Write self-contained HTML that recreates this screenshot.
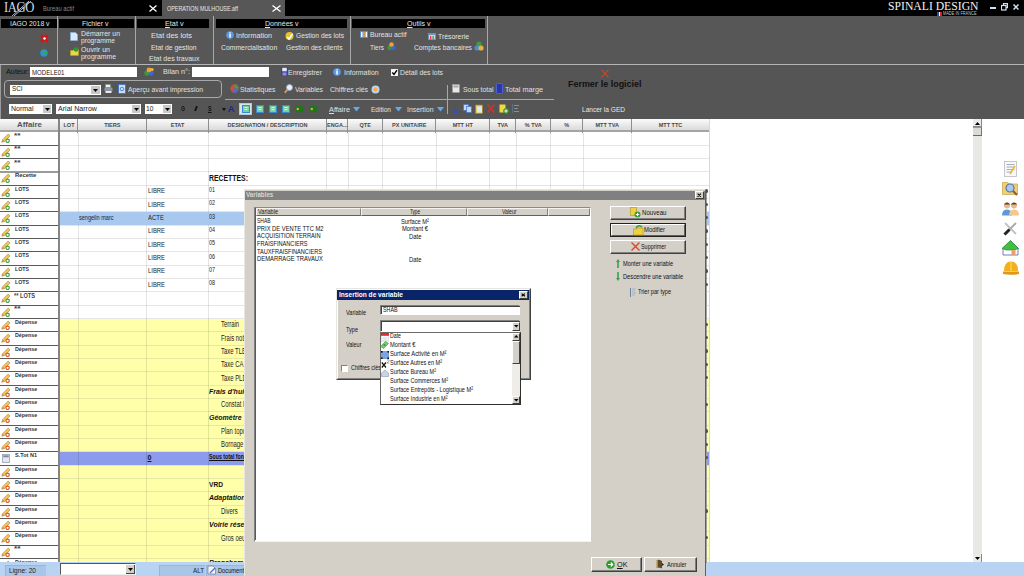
<!DOCTYPE html><html><head><meta charset="utf-8"><style>

*{margin:0;padding:0;box-sizing:border-box}
html,body{width:1024px;height:576px;overflow:hidden;background:#fff;position:relative}
body>div,body>svg{position:absolute}
.t{position:absolute;transform-origin:0 50%;-webkit-font-smoothing:antialiased}

</style></head><body>
<div style="left:0px;top:0px;width:1024px;height:16px;background:#000"></div>
<div style="left:162px;top:0px;width:123px;height:16px;background:#575757"></div>
<div class="t" style="transform:scaleX(0.8451);left:4px;top:-2.00px;font-size:15px;line-height:18px;color:#c9d9ef;font-weight:normal;font-family:'Liberation Serif',sans-serif;white-space:nowrap;letter-spacing:-0.5px;">IAGO</div>
<svg style="left:0;top:0" width="40" height="18"><line x1="12" y1="16" x2="29" y2="1" stroke="#bcd0ea" stroke-width="0.9"/><line x1="14" y1="16" x2="31" y2="1" stroke="#bcd0ea" stroke-width="0.9"/></svg>
<div class="t" style="transform:scaleX(0.8298);left:43px;top:4.80px;font-size:7px;line-height:8px;color:#8a8a8a;font-weight:normal;font-family:'Liberation Sans',sans-serif;white-space:nowrap;">Bureau actif</div>
<svg style="left:149px;top:5px" width="8" height="7"><path d="M0.5 0.5L7.5 6.5M7.5 0.5L0.5 6.5" stroke="#fff" stroke-width="1.3"/></svg>
<div class="t" style="transform:scaleX(0.7723);left:166.5px;top:4.80px;font-size:7px;line-height:8px;color:#e8e8e8;font-weight:normal;font-family:'Liberation Sans',sans-serif;white-space:nowrap;">OPERATION MULHOUSE.aff</div>
<svg style="left:272px;top:5px" width="9" height="7"><path d="M0.5 0.5L8.5 6.5M8.5 0.5L0.5 6.5" stroke="#fff" stroke-width="1.3"/></svg>
<div class="t" style="transform:scaleX(0.9731);left:888px;top:-0.70px;font-size:12px;line-height:14px;color:#f2f2f2;font-weight:normal;font-family:'Liberation Serif',sans-serif;white-space:nowrap;">SPINALI DESIGN</div>
<div style="left:937px;top:12px;width:5px;height:4px;background:linear-gradient(90deg,#2a4fa8 0 33%,#fff 33% 66%,#d22 66%)"></div>
<div class="t" style="transform:scaleX(0.8698);left:943px;top:11.30px;font-size:4.5px;line-height:5px;color:#c8c8c8;font-weight:normal;font-family:'Liberation Sans',sans-serif;white-space:nowrap;">MADE IN FRANCE</div>
<div style="left:990px;top:7px;width:6px;height:2px;background:#d0e0f4"></div>
<svg style="left:1001px;top:3px" width="7" height="8"><rect x="0.5" y="2.5" width="4.5" height="4.5" fill="none" stroke="#d0e0f4" stroke-width="1.2"/><path d="M2.5 2V0.6H6.4V4.6H5" fill="none" stroke="#d0e0f4" stroke-width="1.2"/></svg>
<svg style="left:1013px;top:4px" width="6" height="6"><path d="M0.5 0.5L5.5 5.5M5.5 0.5L0.5 5.5" stroke="#d0e0f4" stroke-width="1.5"/></svg>
<div style="left:0px;top:16px;width:1024px;height:48px;background:#575757"></div>
<div style="left:1px;top:19px;width:55.5px;height:9px;background:#000"></div>
<div style="left:59px;top:19px;width:74.5px;height:9px;background:#000"></div>
<div style="left:137px;top:19px;width:72px;height:9px;background:#000"></div>
<div style="left:216px;top:19px;width:131px;height:9px;background:#000"></div>
<div style="left:352px;top:19px;width:133px;height:9px;background:#000"></div>
<div style="left:57px;top:16px;width:1px;height:48px;background:#a8a8a8"></div>
<div style="left:135px;top:16px;width:1px;height:48px;background:#a8a8a8"></div>
<div style="left:213px;top:16px;width:1px;height:48px;background:#a8a8a8"></div>
<div style="left:350px;top:16px;width:1px;height:48px;background:#a8a8a8"></div>
<div style="left:487px;top:16px;width:1px;height:48px;background:#a8a8a8"></div>
<div style="left:0px;top:64px;width:1024px;height:1px;background:#b4b4b4"></div>
<div class="t" style="transform:scaleX(0.9504);left:9.5px;top:19.10px;font-size:7.2px;line-height:9px;color:#e4e4e4;font-weight:normal;font-family:'Liberation Sans',sans-serif;white-space:nowrap;">IAGO 2018 v</div>
<div class="t" style="transform:scaleX(0.9753);left:81.7px;top:19.10px;font-size:7.2px;line-height:9px;color:#e4e4e4;font-weight:normal;font-family:'Liberation Sans',sans-serif;white-space:nowrap;">Fichier v</div>
<div class="t" style="transform:scaleX(1.0114);left:165.4px;top:19.10px;font-size:7.2px;line-height:9px;color:#e4e4e4;font-weight:normal;font-family:'Liberation Sans',sans-serif;white-space:nowrap;"><span style="text-decoration:underline;text-decoration-thickness:1px;text-underline-offset:1px">E</span>tat v</div>
<div class="t" style="transform:scaleX(0.9745);left:265px;top:18.80px;font-size:7.2px;line-height:9px;color:#e4e4e4;font-weight:normal;font-family:'Liberation Sans',sans-serif;white-space:nowrap;"><span style="text-decoration:underline;text-decoration-thickness:1px;text-underline-offset:1px">D</span>onnées v</div>
<div class="t" style="transform:scaleX(0.9804);left:406.5px;top:18.50px;font-size:7.2px;line-height:9px;color:#e4e4e4;font-weight:normal;font-family:'Liberation Sans',sans-serif;white-space:nowrap;"><span style="text-decoration:underline;text-decoration-thickness:1px;text-underline-offset:1px">O</span>utils v</div>
<svg style="left:40px;top:34px" width="9" height="9"><path d="M1 1L8 8M8 1L1 8" stroke="#e01010" stroke-width="2.6"/><circle cx="4.5" cy="4.5" r="1.2" fill="#fff"/></svg>
<svg style="left:40px;top:48.5px" width="8" height="8"><circle cx="4" cy="4" r="3.8" fill="#2a8fd8"/><path d="M1.5 2.5Q3 1.5 4 3T3 6M5 1.5Q7 3 6 5" stroke="#3cae3c" stroke-width="1.3" fill="none"/></svg>
<svg style="left:70px;top:31.5px" width="8" height="9"><path d="M0.5 0.5H5.5L7.5 2.5V8.5H0.5Z" fill="#dce8f8" stroke="#8ab0e0" stroke-width="0.8"/></svg>
<div class="t" style="transform:scaleX(0.9667);left:81px;top:28.80px;font-size:7.2px;line-height:9px;color:#e4e4e4;font-weight:normal;font-family:'Liberation Sans',sans-serif;white-space:nowrap;">Démarrer un</div>
<div class="t" style="transform:scaleX(0.9252);left:81px;top:35.50px;font-size:7.2px;line-height:9px;color:#e4e4e4;font-weight:normal;font-family:'Liberation Sans',sans-serif;white-space:nowrap;">programme</div>
<svg style="left:70px;top:47px" width="9" height="9"><path d="M0.5 3.5H3L4 2.5H8.5V8.5H0.5Z" fill="#e8d848" stroke="#b8a020" stroke-width="0.6"/><circle cx="6" cy="2.5" r="2.2" fill="#2a9a2a"/></svg>
<div class="t" style="transform:scaleX(0.9810);left:81px;top:44.50px;font-size:7.2px;line-height:9px;color:#e4e4e4;font-weight:normal;font-family:'Liberation Sans',sans-serif;white-space:nowrap;">Ouvrir un</div>
<div class="t" style="transform:scaleX(0.9524);left:81px;top:52.00px;font-size:7.2px;line-height:9px;color:#e4e4e4;font-weight:normal;font-family:'Liberation Sans',sans-serif;white-space:nowrap;">programme</div>
<div class="t" style="transform:scaleX(1.0363);left:150.5px;top:30.70px;font-size:7.2px;line-height:9px;color:#e4e4e4;font-weight:normal;font-family:'Liberation Sans',sans-serif;white-space:nowrap;">Etat des lots</div>
<div class="t" style="transform:scaleX(0.9488);left:150.5px;top:42.50px;font-size:7.2px;line-height:9px;color:#e4e4e4;font-weight:normal;font-family:'Liberation Sans',sans-serif;white-space:nowrap;">Etat de gestion</div>
<div class="t" style="transform:scaleX(0.9723);left:148.5px;top:54.00px;font-size:7.2px;line-height:9px;color:#e4e4e4;font-weight:normal;font-family:'Liberation Sans',sans-serif;white-space:nowrap;">Etat des travaux</div>
<svg style="left:226px;top:31px" width="8" height="9"><circle cx="4" cy="4" r="3.8" fill="#5a9ae6"/><rect x="3.3" y="3" width="1.5" height="3.6" fill="#fff"/><rect x="3.3" y="1.3" width="1.5" height="1.2" fill="#fff"/><path d="M3 7.5L4 9L5 7.5" fill="#5a9ae6"/></svg>
<div class="t" style="transform:scaleX(1.0009);left:236px;top:30.70px;font-size:7.2px;line-height:9px;color:#e4e4e4;font-weight:normal;font-family:'Liberation Sans',sans-serif;white-space:nowrap;">Information</div>
<svg style="left:285px;top:30.5px" width="9" height="10"><circle cx="4.5" cy="5" r="4" fill="#e8c030"/><path d="M2 6L4 8L7.5 3" stroke="#fff" stroke-width="1.5" fill="none"/></svg>
<div class="t" style="transform:scaleX(0.9312);left:295.6px;top:30.70px;font-size:7.2px;line-height:9px;color:#e4e4e4;font-weight:normal;font-family:'Liberation Sans',sans-serif;white-space:nowrap;">Gestion des lots</div>
<div class="t" style="transform:scaleX(0.9505);left:221.4px;top:42.90px;font-size:7.2px;line-height:9px;color:#e4e4e4;font-weight:normal;font-family:'Liberation Sans',sans-serif;white-space:nowrap;">Commercialisation</div>
<div class="t" style="transform:scaleX(0.9303);left:286px;top:42.90px;font-size:7.2px;line-height:9px;color:#e4e4e4;font-weight:normal;font-family:'Liberation Sans',sans-serif;white-space:nowrap;">Gestion des clients</div>
<svg style="left:360px;top:31px" width="8" height="7"><rect x="0" y="0" width="8" height="7" fill="#5a8ad0"/><rect x="1" y="1" width="1.5" height="5" fill="#fff"/><rect x="3.3" y="1" width="1.5" height="5" fill="#f0a040"/><rect x="5.6" y="1" width="1.5" height="5" fill="#fff"/></svg>
<div class="t" style="transform:scaleX(0.9541);left:369.6px;top:30.00px;font-size:7.2px;line-height:9px;color:#e4e4e4;font-weight:normal;font-family:'Liberation Sans',sans-serif;white-space:nowrap;">Bureau actif</div>
<svg style="left:428px;top:33px" width="8" height="7"><rect x="0" y="0" width="8" height="7" fill="#6a90c8"/><rect x="1" y="2" width="6" height="4" fill="#d0d8e8"/><rect x="2" y="3" width="1.3" height="3" fill="#e04040"/><rect x="4.5" y="3" width="1.3" height="3" fill="#40a040"/></svg>
<div class="t" style="transform:scaleX(0.9543);left:438px;top:31.80px;font-size:7.2px;line-height:9px;color:#e4e4e4;font-weight:normal;font-family:'Liberation Sans',sans-serif;white-space:nowrap;">Trésorerie</div>
<div class="t" style="transform:scaleX(0.8907);left:370px;top:42.50px;font-size:7.2px;line-height:9px;color:#e4e4e4;font-weight:normal;font-family:'Liberation Sans',sans-serif;white-space:nowrap;">Tiers</div>
<svg style="left:387px;top:42px" width="9" height="9"><circle cx="3" cy="5.5" r="2.5" fill="#3a9a3a"/><circle cx="6" cy="5.5" r="2.5" fill="#3a6ad0"/><circle cx="4.5" cy="2.5" r="2.2" fill="#f0a030"/></svg>
<div class="t" style="transform:scaleX(0.9364);left:413.5px;top:42.50px;font-size:7.2px;line-height:9px;color:#e4e4e4;font-weight:normal;font-family:'Liberation Sans',sans-serif;white-space:nowrap;">Comptes bancaires</div>
<svg style="left:474px;top:41px" width="10" height="10"><circle cx="5" cy="3" r="2.6" fill="#3aa03a"/><circle cx="3" cy="7" r="2.6" fill="#4a8ad8"/><circle cx="7" cy="7" r="2.6" fill="#e8b040"/></svg>
<div style="left:0px;top:65px;width:1024px;height:54px;background:#555555"></div>
<div style="left:0px;top:65px;width:1px;height:54px;background:#9a9a9a"></div>
<div class="t" style="transform:scaleX(0.9716);left:5.5px;top:67.10px;font-size:7.5px;line-height:9px;color:#111;font-weight:normal;font-family:'Liberation Sans',sans-serif;white-space:nowrap;">Auteur:</div>
<div style="left:30px;top:67px;width:107px;height:10px;background:#fff"></div>
<div class="t" style="transform:scaleX(0.8119);left:31.5px;top:67.50px;font-size:7.5px;line-height:9px;color:#222;font-weight:normal;font-family:'Liberation Sans',sans-serif;white-space:nowrap;">MODELE01</div>
<svg style="left:144px;top:67px" width="10" height="9"><circle cx="3" cy="6" r="2.6" fill="#3a9a3a"/><circle cx="7" cy="6" r="2.6" fill="#3a6ad0"/><circle cx="5" cy="3" r="2.4" fill="#f0a030"/><circle cx="8" cy="2.5" r="1.6" fill="#e8c040"/></svg>
<div class="t" style="transform:scaleX(0.9637);left:163px;top:67.10px;font-size:7.5px;line-height:9px;color:#e0e0e0;font-weight:normal;font-family:'Liberation Sans',sans-serif;white-space:nowrap;">Bilan n°:</div>
<div style="left:192px;top:67px;width:77px;height:10px;background:#fff"></div>
<svg style="left:281px;top:67px" width="7" height="9"><rect x="0" y="0" width="7" height="9" rx="1" fill="#3a3ab0"/><rect x="1.2" y="0.8" width="4.6" height="3.5" fill="#e8e8f0"/><rect x="1.5" y="5.5" width="4" height="3" fill="#9090d0"/></svg>
<div class="t" style="transform:scaleX(0.9267);left:288px;top:68.00px;font-size:7.5px;line-height:9px;color:#e0e0e0;font-weight:normal;font-family:'Liberation Sans',sans-serif;white-space:nowrap;">Enregistrer</div>
<svg style="left:333px;top:67.5px" width="8" height="9"><circle cx="4" cy="4" r="3.8" fill="#5a9ae6"/><rect x="3.3" y="3" width="1.5" height="3.6" fill="#fff"/><rect x="3.3" y="1.3" width="1.5" height="1.2" fill="#fff"/></svg>
<div class="t" style="transform:scaleX(0.9219);left:344px;top:68.00px;font-size:7.5px;line-height:9px;color:#e0e0e0;font-weight:normal;font-family:'Liberation Sans',sans-serif;white-space:nowrap;">Information</div>
<svg style="left:390.5px;top:68.5px" width="7" height="7"><rect x="0" y="0" width="7" height="7" fill="#f4f4f4"/><path d="M1.3 3.5L3 5.3L6 1.2" stroke="#000" stroke-width="1.4" fill="none"/></svg>
<div class="t" style="transform:scaleX(0.9128);left:400px;top:68.00px;font-size:7.5px;line-height:9px;color:#e0e0e0;font-weight:normal;font-family:'Liberation Sans',sans-serif;white-space:nowrap;">Détail des lots</div>
<svg style="left:600.5px;top:68.5px" width="8" height="9"><path d="M0.5 0.5L7.5 8.5M7.5 0.5L0.5 8.5" stroke="#d84828" stroke-width="1.1"/></svg>
<div class="t" style="transform:scaleX(1.0155);left:568px;top:79.40px;font-size:8.8px;line-height:11px;color:#111;font-weight:bold;font-family:'Liberation Sans',sans-serif;white-space:nowrap;">Fermer le logiciel</div>
<div class="t" style="transform:scaleX(0.8739);left:582px;top:104.50px;font-size:7.5px;line-height:9px;color:#e8e8e8;font-weight:normal;font-family:'Liberation Sans',sans-serif;white-space:nowrap;">Lancer la GED</div>
<div style="left:4px;top:80px;width:218px;height:18px;border:1.5px solid #a8a8a8;border-radius:4px;"></div>
<div style="left:9.5px;top:84.5px;width:91px;height:10px;background:#fff"></div>
<div style="left:91px;top:85.5px;width:8.5px;height:8.5px;background:#c8c8c8"></div>
<svg style="left:93px;top:88.5px" width="5" height="3"><path d="M0 0H5L2.5 3Z" fill="#000"/></svg>
<div class="t" style="transform:scaleX(0.7869);left:11.5px;top:84.00px;font-size:8px;line-height:10px;color:#222;font-weight:normal;font-family:'Liberation Sans',sans-serif;white-space:nowrap;">SCI</div>
<svg style="left:104px;top:84px" width="9" height="10"><rect x="1.5" y="0.5" width="5" height="3" fill="#f0f0f0" stroke="#888" stroke-width="0.5"/><rect x="0.5" y="3.5" width="8" height="4" rx="1" fill="#8a96a8"/><rect x="1.5" y="7" width="6" height="2" fill="#e8e8e8"/></svg>
<svg style="left:118px;top:83.5px" width="8" height="10"><rect x="0.5" y="0.5" width="7" height="9" fill="#d0e0f8" stroke="#3070c8" stroke-width="0.8"/><circle cx="4" cy="5" r="1.8" fill="none" stroke="#3070c8" stroke-width="0.8"/></svg>
<div class="t" style="transform:scaleX(0.9086);left:128px;top:85.00px;font-size:7.5px;line-height:9px;color:#e0e0e0;font-weight:normal;font-family:'Liberation Sans',sans-serif;white-space:nowrap;">Aperçu avant impression</div>
<svg style="left:230px;top:84px" width="9" height="9"><circle cx="4.5" cy="4.5" r="4.2" fill="#d04848"/><path d="M4.5 4.5V0.3A4.2 4.2 0 0 1 8.7 4.5Z" fill="#40a040"/><path d="M4.5 4.5H8.7A4.2 4.2 0 0 1 3 8.4Z" fill="#4070d0"/></svg>
<div class="t" style="transform:scaleX(0.9154);left:240px;top:84.50px;font-size:7.5px;line-height:9px;color:#e0e0e0;font-weight:normal;font-family:'Liberation Sans',sans-serif;white-space:nowrap;">Statistiques</div>
<svg style="left:284px;top:84px" width="9" height="10"><circle cx="5.5" cy="3.5" r="3" fill="#e8f0ff" stroke="#9ab" stroke-width="0.8"/><path d="M3.5 5.5L0.8 8.8" stroke="#e8a060" stroke-width="1.8"/></svg>
<div class="t" style="transform:scaleX(0.9115);left:295px;top:85.00px;font-size:7.5px;line-height:9px;color:#e0e0e0;font-weight:normal;font-family:'Liberation Sans',sans-serif;white-space:nowrap;">Variables</div>
<div class="t" style="transform:scaleX(0.9237);left:330px;top:85.00px;font-size:7.5px;line-height:9px;color:#e0e0e0;font-weight:normal;font-family:'Liberation Sans',sans-serif;white-space:nowrap;">Chiffres clés</div>
<svg style="left:370.5px;top:84.5px" width="9" height="9"><circle cx="4.5" cy="4.5" r="4" fill="#b8d4f0"/><circle cx="4.5" cy="4.5" r="2" fill="#f0b050"/></svg>
<div style="left:225px;top:98.5px;width:328.5px;height:1.2px;background:#a8a8a8"></div>
<div style="left:446.5px;top:85px;width:1.2px;height:29px;background:#a8a8a8"></div>
<svg style="left:452px;top:84px" width="8" height="9"><rect x="0.5" y="0.5" width="7" height="8" fill="#e8e8e8" stroke="#999" stroke-width="0.6"/><rect x="1.5" y="1.5" width="5" height="2" fill="#a0a8b8"/></svg>
<div class="t" style="transform:scaleX(0.9143);left:462.6px;top:85.00px;font-size:7.5px;line-height:9px;color:#e0e0e0;font-weight:normal;font-family:'Liberation Sans',sans-serif;white-space:nowrap;">Sous total</div>
<svg style="left:496px;top:83px" width="7" height="11"><rect x="0.5" y="0.5" width="6" height="10" rx="1" fill="#2838a8" stroke="#5a6ae0" stroke-width="0.8"/></svg>
<div class="t" style="transform:scaleX(0.9697);left:505px;top:85.00px;font-size:7.5px;line-height:9px;color:#e0e0e0;font-weight:normal;font-family:'Liberation Sans',sans-serif;white-space:nowrap;">Total marge</div>
<div style="left:9px;top:104px;width:43px;height:9.5px;background:#fff"></div>
<div style="left:43px;top:105px;width:8px;height:7.5px;background:#c8c8c8"></div>
<svg style="left:45px;top:107.75px" width="5" height="3"><path d="M0 0H5L2.5 3Z" fill="#000"/></svg>
<div class="t" style="transform:scaleX(0.9308);left:10.5px;top:103.75px;font-size:7.5px;line-height:9px;color:#222;font-weight:normal;font-family:'Liberation Sans',sans-serif;white-space:nowrap;">Normal</div>
<div style="left:56px;top:104px;width:84.5px;height:9.5px;background:#fff"></div>
<div style="left:131.5px;top:105px;width:8px;height:7.5px;background:#c8c8c8"></div>
<svg style="left:133.5px;top:107.75px" width="5" height="3"><path d="M0 0H5L2.5 3Z" fill="#000"/></svg>
<div class="t" style="transform:scaleX(0.9451);left:57.5px;top:103.75px;font-size:7.5px;line-height:9px;color:#222;font-weight:normal;font-family:'Liberation Sans',sans-serif;white-space:nowrap;">Arial Narrow</div>
<div style="left:144.5px;top:104px;width:27.5px;height:9.5px;background:#fff"></div>
<div style="left:163.0px;top:105px;width:8px;height:7.5px;background:#c8c8c8"></div>
<svg style="left:165.0px;top:107.75px" width="5" height="3"><path d="M0 0H5L2.5 3Z" fill="#000"/></svg>
<div class="t" style="transform:scaleX(0.8989);left:146.0px;top:103.75px;font-size:7.5px;line-height:9px;color:#222;font-weight:normal;font-family:'Liberation Sans',sans-serif;white-space:nowrap;">10</div>
<div class="t" style="transform:scaleX(0.6416);left:180.5px;top:104.00px;font-size:8px;line-height:10px;color:#111;font-weight:bold;font-family:'Liberation Sans',sans-serif;white-space:nowrap;">G</div>
<div class="t" style="transform:scaleX(1.5664);left:193.8px;top:104.00px;font-size:8px;line-height:10px;color:#111;font-weight:bold;font-family:'Liberation Sans',sans-serif;white-space:nowrap;font-style:italic;">I</div>
<div class="t" style="transform:scaleX(0.6550);left:207.5px;top:104.00px;font-size:8px;line-height:10px;color:#111;font-weight:bold;font-family:'Liberation Sans',sans-serif;white-space:nowrap;text-decoration:underline;">S</div>
<svg style="left:221.5px;top:107.5px" width="4" height="3"><path d="M0 0H4L2 3Z" fill="#111"/></svg>
<div class="t" style="transform:scaleX(0.9692);left:227.5px;top:103.50px;font-size:9px;line-height:11px;color:#2020a0;font-weight:bold;font-family:'Liberation Sans',sans-serif;white-space:nowrap;">A</div>
<div style="left:239px;top:103px;width:13.3px;height:11.7px;background:#d8e4ea;border:1px solid #b8c8d0"></div>
<svg style="left:241.5px;top:105px" width="8" height="8"><rect x="0" y="0" width="8" height="8" fill="#3a8ad0"/><rect x="1" y="1" width="6" height="6" fill="#7ad0a0"/><rect x="2.5" y="2" width="3" height="0.8" fill="#fff"/><rect x="2.5" y="4" width="3" height="0.8" fill="#fff"/></svg>
<svg style="left:256px;top:105px" width="8" height="8"><rect x="0" y="0" width="8" height="8" fill="#3a8ad0"/><rect x="1" y="1" width="6" height="6" fill="#7ad0a0"/><rect x="2.5" y="2" width="3" height="0.8" fill="#fff"/><rect x="2.5" y="4" width="3" height="0.8" fill="#fff"/></svg>
<svg style="left:269px;top:105px" width="8" height="8"><rect x="0" y="0" width="8" height="8" fill="#3a8ad0"/><rect x="1" y="1" width="6" height="6" fill="#7ad0a0"/><rect x="2.5" y="2" width="3" height="0.8" fill="#fff"/><rect x="2.5" y="4" width="3" height="0.8" fill="#fff"/></svg>
<svg style="left:282px;top:105px" width="8" height="8"><rect x="0" y="0" width="8" height="8" fill="#3a8ad0"/><rect x="1" y="1" width="6" height="6" fill="#7ad0a0"/><rect x="2.5" y="2" width="3" height="0.8" fill="#fff"/><rect x="2.5" y="4" width="3" height="0.8" fill="#fff"/></svg>
<svg style="left:295px;top:105px" width="9" height="8"><ellipse cx="4.5" cy="4" rx="4.3" ry="3.6" fill="#1a7a1a"/><circle cx="2.8" cy="4" r="1.2" fill="#f0a040"/></svg>
<svg style="left:308.5px;top:105px" width="9" height="8"><ellipse cx="4.5" cy="4" rx="4.3" ry="3.6" fill="#1a7a1a"/><circle cx="2.8" cy="4" r="1.2" fill="#f0a040"/></svg>
<div class="t" style="transform:scaleX(0.9739);left:329px;top:105.00px;font-size:7.5px;line-height:9px;color:#e0e0e0;font-weight:normal;font-family:'Liberation Sans',sans-serif;white-space:nowrap;"><span style="text-decoration:underline;text-decoration-thickness:1px;text-underline-offset:1px">A</span>ffaire</div>
<svg style="left:353px;top:107px" width="7" height="5"><path d="M0 0H7L3.5 4.5Z" fill="#6aa8e8"/></svg>
<div class="t" style="transform:scaleX(0.8719);left:371px;top:105.00px;font-size:7.5px;line-height:9px;color:#e0e0e0;font-weight:normal;font-family:'Liberation Sans',sans-serif;white-space:nowrap;">Edition</div>
<svg style="left:395px;top:107px" width="7" height="5"><path d="M0 0H7L3.5 4.5Z" fill="#6aa8e8"/></svg>
<div class="t" style="transform:scaleX(0.9207);left:406.5px;top:105.00px;font-size:7.5px;line-height:9px;color:#e0e0e0;font-weight:normal;font-family:'Liberation Sans',sans-serif;white-space:nowrap;">Insertion</div>
<svg style="left:437px;top:107px" width="7" height="5"><path d="M0 0H7L3.5 4.5Z" fill="#6aa8e8"/></svg>
<svg style="left:452px;top:103px" width="8" height="11"><path d="M4 0L3 6L1 10H6L4 6Z" fill="#3050c0"/></svg>
<svg style="left:463px;top:104px" width="9" height="9"><rect x="0.5" y="0.5" width="5" height="6" fill="#c0d8f8" stroke="#4a70c0" stroke-width="0.7"/><rect x="3.5" y="2.5" width="5" height="6" fill="#c0d8f8" stroke="#4a70c0" stroke-width="0.7"/></svg>
<svg style="left:475px;top:103.5px" width="8" height="10"><rect x="0.5" y="1" width="7" height="8.5" fill="#e8c860" stroke="#a08030" stroke-width="0.6"/><rect x="2" y="2.5" width="5" height="6" fill="#d8e8f8"/></svg>
<svg style="left:487px;top:104px" width="8" height="9"><path d="M0.5 0.5L7.5 8.5M7.5 0.5L0.5 8.5" stroke="#e03020" stroke-width="1.3"/></svg>
<svg style="left:499px;top:103.5px" width="10" height="10"><rect x="0.5" y="0.5" width="6" height="8" fill="#f0d840"/><circle cx="7" cy="7" r="2.8" fill="#30a030"/><path d="M5.3 7H8.7M7 5.3V8.7" stroke="#fff" stroke-width="0.9"/></svg>
<svg style="left:512px;top:104px" width="8" height="9"><rect x="0" y="0" width="1" height="9" fill="#607080"/><rect x="2" y="1" width="5" height="1" fill="#8090a0"/><rect x="2" y="4" width="4" height="1" fill="#8090a0"/><rect x="2" y="7" width="5" height="1" fill="#8090a0"/></svg>
<div style="left:0px;top:118.5px;width:1024px;height:444px;background:#fff"></div>
<div style="left:60px;top:318.4666666666667px;width:649.5px;height:244.0333333333333px;background:#ffffaa"></div>
<div style="left:60px;top:451.8px;width:649.5px;height:13.333333333333334px;background:#8c9beb"></div>
<div style="left:60px;top:144.63333333333335px;width:649.5px;height:1px;background:#e6e6e6"></div>
<div style="left:60px;top:157.96666666666667px;width:649.5px;height:1px;background:#e6e6e6"></div>
<div style="left:60px;top:171.3px;width:649.5px;height:1px;background:#e6e6e6"></div>
<div style="left:60px;top:184.63333333333335px;width:649.5px;height:1px;background:#e6e6e6"></div>
<div style="left:60px;top:197.9666666666667px;width:649.5px;height:1px;background:#e6e6e6"></div>
<div style="left:60px;top:211.3px;width:649.5px;height:1px;background:#e6e6e6"></div>
<div style="left:60px;top:224.63333333333335px;width:649.5px;height:1px;background:#e6e6e6"></div>
<div style="left:60px;top:237.9666666666667px;width:649.5px;height:1px;background:#e6e6e6"></div>
<div style="left:60px;top:251.3px;width:649.5px;height:1px;background:#e6e6e6"></div>
<div style="left:60px;top:264.6333333333333px;width:649.5px;height:1px;background:#e6e6e6"></div>
<div style="left:60px;top:277.9666666666667px;width:649.5px;height:1px;background:#e6e6e6"></div>
<div style="left:60px;top:291.3px;width:649.5px;height:1px;background:#e6e6e6"></div>
<div style="left:60px;top:304.6333333333333px;width:649.5px;height:1px;background:#e6e6e6"></div>
<div style="left:60px;top:317.9666666666667px;width:649.5px;height:1px;background:#e6e6e6"></div>
<div style="left:60px;top:331.3px;width:649.5px;height:1px;background:#e8e8a0"></div>
<div style="left:60px;top:344.6333333333333px;width:649.5px;height:1px;background:#e8e8a0"></div>
<div style="left:60px;top:357.9666666666667px;width:649.5px;height:1px;background:#e8e8a0"></div>
<div style="left:60px;top:371.3px;width:649.5px;height:1px;background:#e8e8a0"></div>
<div style="left:60px;top:384.6333333333333px;width:649.5px;height:1px;background:#e8e8a0"></div>
<div style="left:60px;top:397.9666666666667px;width:649.5px;height:1px;background:#e8e8a0"></div>
<div style="left:60px;top:411.3px;width:649.5px;height:1px;background:#e8e8a0"></div>
<div style="left:60px;top:424.6333333333334px;width:649.5px;height:1px;background:#e8e8a0"></div>
<div style="left:60px;top:437.9666666666667px;width:649.5px;height:1px;background:#e8e8a0"></div>
<div style="left:60px;top:451.3px;width:649.5px;height:1px;background:#e8e8a0"></div>
<div style="left:60px;top:464.6333333333334px;width:649.5px;height:1px;background:#e8e8a0"></div>
<div style="left:60px;top:477.9666666666667px;width:649.5px;height:1px;background:#e8e8a0"></div>
<div style="left:60px;top:491.3px;width:649.5px;height:1px;background:#e8e8a0"></div>
<div style="left:60px;top:504.6333333333334px;width:649.5px;height:1px;background:#e8e8a0"></div>
<div style="left:60px;top:517.9666666666667px;width:649.5px;height:1px;background:#e8e8a0"></div>
<div style="left:60px;top:531.3px;width:649.5px;height:1px;background:#e8e8a0"></div>
<div style="left:60px;top:544.6333333333334px;width:649.5px;height:1px;background:#e8e8a0"></div>
<div style="left:60px;top:557.9666666666667px;width:649.5px;height:1px;background:#e8e8a0"></div>
<div style="left:77.5px;top:132.5px;width:1px;height:430.0px;background:rgba(0,0,0,0.10)"></div>
<div style="left:146.0px;top:132.5px;width:1px;height:430.0px;background:rgba(0,0,0,0.10)"></div>
<div style="left:208.0px;top:132.5px;width:1px;height:430.0px;background:rgba(0,0,0,0.10)"></div>
<div style="left:326.0px;top:132.5px;width:1px;height:430.0px;background:rgba(0,0,0,0.10)"></div>
<div style="left:347.5px;top:132.5px;width:1px;height:430.0px;background:rgba(0,0,0,0.10)"></div>
<div style="left:382.0px;top:132.5px;width:1px;height:430.0px;background:rgba(0,0,0,0.10)"></div>
<div style="left:435.5px;top:132.5px;width:1px;height:430.0px;background:rgba(0,0,0,0.10)"></div>
<div style="left:489.0px;top:132.5px;width:1px;height:430.0px;background:rgba(0,0,0,0.10)"></div>
<div style="left:515.5px;top:132.5px;width:1px;height:430.0px;background:rgba(0,0,0,0.10)"></div>
<div style="left:550.0px;top:132.5px;width:1px;height:430.0px;background:rgba(0,0,0,0.10)"></div>
<div style="left:582.5px;top:132.5px;width:1px;height:430.0px;background:rgba(0,0,0,0.10)"></div>
<div style="left:631.0px;top:132.5px;width:1px;height:430.0px;background:rgba(0,0,0,0.10)"></div>
<div style="left:709.0px;top:132.5px;width:1px;height:430.0px;background:rgba(0,0,0,0.10)"></div>
<div style="left:60px;top:211.8px;width:649.5px;height:13.333333333333334px;background:#a8c8f0"></div>
<div style="left:0px;top:118.5px;width:709.5px;height:11.8px;background:linear-gradient(#fbfbfb,#dadada)"></div>
<div style="left:0px;top:130.2px;width:709.5px;height:1.8px;background:#a4a4a4"></div>
<div style="left:77.2px;top:118.5px;width:1.3px;height:14px;background:#8e8e8e"></div>
<div style="left:145.7px;top:118.5px;width:1.3px;height:14px;background:#8e8e8e"></div>
<div style="left:207.7px;top:118.5px;width:1.3px;height:14px;background:#8e8e8e"></div>
<div style="left:325.7px;top:118.5px;width:1.3px;height:14px;background:#8e8e8e"></div>
<div style="left:347.2px;top:118.5px;width:1.3px;height:14px;background:#8e8e8e"></div>
<div style="left:381.7px;top:118.5px;width:1.3px;height:14px;background:#8e8e8e"></div>
<div style="left:435.2px;top:118.5px;width:1.3px;height:14px;background:#8e8e8e"></div>
<div style="left:488.7px;top:118.5px;width:1.3px;height:14px;background:#8e8e8e"></div>
<div style="left:515.2px;top:118.5px;width:1.3px;height:14px;background:#8e8e8e"></div>
<div style="left:549.7px;top:118.5px;width:1.3px;height:14px;background:#8e8e8e"></div>
<div style="left:582.2px;top:118.5px;width:1.3px;height:14px;background:#8e8e8e"></div>
<div style="left:630.7px;top:118.5px;width:1.3px;height:14px;background:#8e8e8e"></div>
<div style="left:708.7px;top:118.5px;width:1.3px;height:14px;background:#8e8e8e"></div>
<div style="left:58px;top:118.5px;width:2px;height:444.0px;background:#858585"></div>
<div class="t" style="transform:scaleX(1.0263);left:16.8px;top:120.10px;font-size:7.7px;line-height:9px;color:#555;font-weight:bold;font-family:'Liberation Sans',sans-serif;white-space:nowrap;">Affaire</div>
<div style="left:60px;top:121px;width:18px;height:8px;font:bold 5.5px/8px 'Liberation Sans',sans-serif;color:#484848;text-align:center;white-space:nowrap;overflow:hidden">LOT</div>
<div style="left:78px;top:121px;width:68.5px;height:8px;font:bold 5.5px/8px 'Liberation Sans',sans-serif;color:#484848;text-align:center;white-space:nowrap;overflow:hidden">TIERS</div>
<div style="left:146.5px;top:121px;width:62.0px;height:8px;font:bold 5.5px/8px 'Liberation Sans',sans-serif;color:#484848;text-align:center;white-space:nowrap;overflow:hidden">ETAT</div>
<div style="left:208.5px;top:121px;width:118.0px;height:8px;font:bold 5.5px/8px 'Liberation Sans',sans-serif;color:#484848;text-align:center;white-space:nowrap;overflow:hidden">DESIGNATION / DESCRIPTION</div>
<div style="left:326.5px;top:121px;width:21.5px;height:8px;font:bold 5.5px/8px 'Liberation Sans',sans-serif;color:#484848;text-align:center;white-space:nowrap;overflow:hidden">ENGA...</div>
<div style="left:348px;top:121px;width:34.5px;height:8px;font:bold 5.5px/8px 'Liberation Sans',sans-serif;color:#484848;text-align:center;white-space:nowrap;overflow:hidden">QTE</div>
<div style="left:382.5px;top:121px;width:53.5px;height:8px;font:bold 5.5px/8px 'Liberation Sans',sans-serif;color:#484848;text-align:center;white-space:nowrap;overflow:hidden">PX UNITAIRE</div>
<div style="left:436px;top:121px;width:53.5px;height:8px;font:bold 5.5px/8px 'Liberation Sans',sans-serif;color:#484848;text-align:center;white-space:nowrap;overflow:hidden">MTT HT</div>
<div style="left:489.5px;top:121px;width:26.5px;height:8px;font:bold 5.5px/8px 'Liberation Sans',sans-serif;color:#484848;text-align:center;white-space:nowrap;overflow:hidden">TVA</div>
<div style="left:516px;top:121px;width:34.5px;height:8px;font:bold 5.5px/8px 'Liberation Sans',sans-serif;color:#484848;text-align:center;white-space:nowrap;overflow:hidden">% TVA</div>
<div style="left:550.5px;top:121px;width:32.5px;height:8px;font:bold 5.5px/8px 'Liberation Sans',sans-serif;color:#484848;text-align:center;white-space:nowrap;overflow:hidden">%</div>
<div style="left:583px;top:121px;width:48.5px;height:8px;font:bold 5.5px/8px 'Liberation Sans',sans-serif;color:#484848;text-align:center;white-space:nowrap;overflow:hidden">MTT TVA</div>
<div style="left:631.5px;top:121px;width:78.0px;height:8px;font:bold 5.5px/8px 'Liberation Sans',sans-serif;color:#484848;text-align:center;white-space:nowrap;overflow:hidden">MTT TTC</div>
<div style="left:973px;top:118.5px;width:8.5px;height:444px;background:#e8e8e4"></div>
<div style="left:973px;top:119px;width:8.5px;height:8px;background:#ecebe6;border-right:1px solid #888;border-bottom:1px solid #888"></div>
<svg style="left:975px;top:121.5px" width="5" height="3"><path d="M0 3H5L2.5 0Z" fill="#000"/></svg>
<div style="left:973px;top:127px;width:8.5px;height:9px;background:#dcdad2;border-top:1px solid #999;border-right:1px solid #777;border-bottom:1px solid #666"></div>
<div style="left:973px;top:554px;width:8.5px;height:8.5px;background:#ecebe6;border-right:1px solid #888;border-bottom:1px solid #888"></div>
<svg style="left:975px;top:557px" width="5" height="3"><path d="M0 0H5L2.5 3Z" fill="#000"/></svg>
<svg style="left:1px;top:133.30px" width="10" height="10"><path d="M0.8 9.2L1.5 6.8L7.2 1.1L9 2.9L3.2 8.6Z" fill="#f2cc60" stroke="#a87028" stroke-width="0.6"/><path d="M1.5 6.8L3.2 8.6" stroke="#a87028" stroke-width="0.5"/><circle cx="6.6" cy="7.8" r="1.7" fill="#fff" stroke="#3aa03a" stroke-width="1.1"/></svg>
<div class="t" style="transform:scaleX(1.2840);left:13.5px;top:132.10px;font-size:6.5px;line-height:8px;color:#444;font-weight:bold;font-family:'Liberation Sans',sans-serif;white-space:nowrap;">**</div>
<div style="left:0px;top:144.63333333333335px;width:58px;height:1px;background:#5a5a5a"></div>
<svg style="left:1px;top:146.63px" width="10" height="10"><path d="M0.8 9.2L1.5 6.8L7.2 1.1L9 2.9L3.2 8.6Z" fill="#f2cc60" stroke="#a87028" stroke-width="0.6"/><path d="M1.5 6.8L3.2 8.6" stroke="#a87028" stroke-width="0.5"/><circle cx="6.6" cy="7.8" r="1.7" fill="#fff" stroke="#3aa03a" stroke-width="1.1"/></svg>
<div class="t" style="transform:scaleX(1.2840);left:13.5px;top:145.43px;font-size:6.5px;line-height:8px;color:#444;font-weight:bold;font-family:'Liberation Sans',sans-serif;white-space:nowrap;">**</div>
<div style="left:0px;top:157.96666666666667px;width:58px;height:1px;background:#5a5a5a"></div>
<svg style="left:1px;top:159.97px" width="10" height="10"><path d="M0.8 9.2L1.5 6.8L7.2 1.1L9 2.9L3.2 8.6Z" fill="#f2cc60" stroke="#a87028" stroke-width="0.6"/><path d="M1.5 6.8L3.2 8.6" stroke="#a87028" stroke-width="0.5"/><circle cx="6.6" cy="7.8" r="1.7" fill="#fff" stroke="#3aa03a" stroke-width="1.1"/></svg>
<div class="t" style="transform:scaleX(1.2840);left:13.5px;top:158.77px;font-size:6.5px;line-height:8px;color:#444;font-weight:bold;font-family:'Liberation Sans',sans-serif;white-space:nowrap;">**</div>
<div style="left:0px;top:170.8px;width:58px;height:2px;background:#9a9a9a"></div>
<svg style="left:1px;top:173.30px" width="10" height="10"><path d="M0.8 9.2L1.5 6.8L7.2 1.1L9 2.9L3.2 8.6Z" fill="#f2cc60" stroke="#a87028" stroke-width="0.6"/><path d="M1.5 6.8L3.2 8.6" stroke="#a87028" stroke-width="0.5"/><circle cx="6.6" cy="7.8" r="1.7" fill="#fff" stroke="#3aa03a" stroke-width="1.1"/></svg>
<div class="t" style="transform:scaleX(0.9821);left:14.6px;top:172.30px;font-size:6px;line-height:7px;color:#333;font-weight:bold;font-family:'Liberation Sans',sans-serif;white-space:nowrap;">Recette</div>
<div style="left:0px;top:184.63333333333335px;width:58px;height:1px;background:#5a5a5a"></div>
<svg style="left:1px;top:186.63px" width="10" height="10"><path d="M0.8 9.2L1.5 6.8L7.2 1.1L9 2.9L3.2 8.6Z" fill="#f2cc60" stroke="#a87028" stroke-width="0.6"/><path d="M1.5 6.8L3.2 8.6" stroke="#a87028" stroke-width="0.5"/><circle cx="6.6" cy="7.8" r="1.7" fill="#fff" stroke="#3aa03a" stroke-width="1.1"/></svg>
<div class="t" style="transform:scaleX(0.8750);left:14.6px;top:185.63px;font-size:6px;line-height:7px;color:#333;font-weight:bold;font-family:'Liberation Sans',sans-serif;white-space:nowrap;">LOTS</div>
<div style="left:0px;top:197.9666666666667px;width:58px;height:1px;background:#5a5a5a"></div>
<svg style="left:1px;top:199.97px" width="10" height="10"><path d="M0.8 9.2L1.5 6.8L7.2 1.1L9 2.9L3.2 8.6Z" fill="#f2cc60" stroke="#a87028" stroke-width="0.6"/><path d="M1.5 6.8L3.2 8.6" stroke="#a87028" stroke-width="0.5"/><circle cx="6.6" cy="7.8" r="1.7" fill="#fff" stroke="#3aa03a" stroke-width="1.1"/></svg>
<div class="t" style="transform:scaleX(0.8750);left:14.6px;top:198.97px;font-size:6px;line-height:7px;color:#333;font-weight:bold;font-family:'Liberation Sans',sans-serif;white-space:nowrap;">LOTS</div>
<div style="left:0px;top:211.3px;width:58px;height:1px;background:#5a5a5a"></div>
<svg style="left:1px;top:213.30px" width="10" height="10"><path d="M0.8 9.2L1.5 6.8L7.2 1.1L9 2.9L3.2 8.6Z" fill="#f2cc60" stroke="#a87028" stroke-width="0.6"/><path d="M1.5 6.8L3.2 8.6" stroke="#a87028" stroke-width="0.5"/><circle cx="6.6" cy="7.8" r="1.7" fill="#fff" stroke="#3aa03a" stroke-width="1.1"/></svg>
<div class="t" style="transform:scaleX(0.8750);left:14.6px;top:212.30px;font-size:6px;line-height:7px;color:#333;font-weight:bold;font-family:'Liberation Sans',sans-serif;white-space:nowrap;">LOTS</div>
<div style="left:0px;top:224.63333333333335px;width:58px;height:1px;background:#5a5a5a"></div>
<svg style="left:1px;top:226.63px" width="10" height="10"><path d="M0.8 9.2L1.5 6.8L7.2 1.1L9 2.9L3.2 8.6Z" fill="#f2cc60" stroke="#a87028" stroke-width="0.6"/><path d="M1.5 6.8L3.2 8.6" stroke="#a87028" stroke-width="0.5"/><circle cx="6.6" cy="7.8" r="1.7" fill="#fff" stroke="#3aa03a" stroke-width="1.1"/></svg>
<div class="t" style="transform:scaleX(0.8750);left:14.6px;top:225.63px;font-size:6px;line-height:7px;color:#333;font-weight:bold;font-family:'Liberation Sans',sans-serif;white-space:nowrap;">LOTS</div>
<div style="left:0px;top:237.9666666666667px;width:58px;height:1px;background:#5a5a5a"></div>
<svg style="left:1px;top:239.97px" width="10" height="10"><path d="M0.8 9.2L1.5 6.8L7.2 1.1L9 2.9L3.2 8.6Z" fill="#f2cc60" stroke="#a87028" stroke-width="0.6"/><path d="M1.5 6.8L3.2 8.6" stroke="#a87028" stroke-width="0.5"/><circle cx="6.6" cy="7.8" r="1.7" fill="#fff" stroke="#3aa03a" stroke-width="1.1"/></svg>
<div class="t" style="transform:scaleX(0.8750);left:14.6px;top:238.97px;font-size:6px;line-height:7px;color:#333;font-weight:bold;font-family:'Liberation Sans',sans-serif;white-space:nowrap;">LOTS</div>
<div style="left:0px;top:251.3px;width:58px;height:1px;background:#5a5a5a"></div>
<svg style="left:1px;top:253.30px" width="10" height="10"><path d="M0.8 9.2L1.5 6.8L7.2 1.1L9 2.9L3.2 8.6Z" fill="#f2cc60" stroke="#a87028" stroke-width="0.6"/><path d="M1.5 6.8L3.2 8.6" stroke="#a87028" stroke-width="0.5"/><circle cx="6.6" cy="7.8" r="1.7" fill="#fff" stroke="#3aa03a" stroke-width="1.1"/></svg>
<div class="t" style="transform:scaleX(0.8750);left:14.6px;top:252.30px;font-size:6px;line-height:7px;color:#333;font-weight:bold;font-family:'Liberation Sans',sans-serif;white-space:nowrap;">LOTS</div>
<div style="left:0px;top:264.6333333333333px;width:58px;height:1px;background:#5a5a5a"></div>
<svg style="left:1px;top:266.63px" width="10" height="10"><path d="M0.8 9.2L1.5 6.8L7.2 1.1L9 2.9L3.2 8.6Z" fill="#f2cc60" stroke="#a87028" stroke-width="0.6"/><path d="M1.5 6.8L3.2 8.6" stroke="#a87028" stroke-width="0.5"/><circle cx="6.6" cy="7.8" r="1.7" fill="#fff" stroke="#3aa03a" stroke-width="1.1"/></svg>
<div class="t" style="transform:scaleX(0.8750);left:14.6px;top:265.63px;font-size:6px;line-height:7px;color:#333;font-weight:bold;font-family:'Liberation Sans',sans-serif;white-space:nowrap;">LOTS</div>
<div style="left:0px;top:277.9666666666667px;width:58px;height:1px;background:#5a5a5a"></div>
<svg style="left:1px;top:279.97px" width="10" height="10"><path d="M0.8 9.2L1.5 6.8L7.2 1.1L9 2.9L3.2 8.6Z" fill="#f2cc60" stroke="#a87028" stroke-width="0.6"/><path d="M1.5 6.8L3.2 8.6" stroke="#a87028" stroke-width="0.5"/><circle cx="6.6" cy="7.8" r="1.7" fill="#fff" stroke="#3aa03a" stroke-width="1.1"/></svg>
<div class="t" style="transform:scaleX(0.8750);left:14.6px;top:278.97px;font-size:6px;line-height:7px;color:#333;font-weight:bold;font-family:'Liberation Sans',sans-serif;white-space:nowrap;">LOTS</div>
<div style="left:0px;top:291.3px;width:58px;height:1px;background:#5a5a5a"></div>
<svg style="left:1px;top:293.30px" width="10" height="10"><path d="M0.8 9.2L1.5 6.8L7.2 1.1L9 2.9L3.2 8.6Z" fill="#f2cc60" stroke="#a87028" stroke-width="0.6"/><path d="M1.5 6.8L3.2 8.6" stroke="#a87028" stroke-width="0.5"/><circle cx="6.6" cy="7.8" r="1.7" fill="#fff" stroke="#3aa03a" stroke-width="1.1"/></svg>
<div class="t" style="transform:scaleX(0.8677);left:13.5px;top:292.10px;font-size:6.5px;line-height:8px;color:#444;font-weight:bold;font-family:'Liberation Sans',sans-serif;white-space:nowrap;">** LOTS</div>
<div style="left:0px;top:304.6333333333333px;width:58px;height:1px;background:#5a5a5a"></div>
<svg style="left:1px;top:306.63px" width="10" height="10"><path d="M0.8 9.2L1.5 6.8L7.2 1.1L9 2.9L3.2 8.6Z" fill="#f2cc60" stroke="#a87028" stroke-width="0.6"/><path d="M1.5 6.8L3.2 8.6" stroke="#a87028" stroke-width="0.5"/><circle cx="6.6" cy="7.8" r="1.7" fill="#fff" stroke="#3aa03a" stroke-width="1.1"/></svg>
<div class="t" style="transform:scaleX(1.2840);left:13.5px;top:305.43px;font-size:6.5px;line-height:8px;color:#444;font-weight:bold;font-family:'Liberation Sans',sans-serif;white-space:nowrap;">**</div>
<div style="left:0px;top:317.9666666666667px;width:58px;height:1px;background:#5a5a5a"></div>
<svg style="left:1px;top:319.97px" width="10" height="10"><path d="M0.8 9.2L1.5 6.8L7.2 1.1L9 2.9L3.2 8.6Z" fill="#f2cc60" stroke="#a87028" stroke-width="0.6"/><path d="M1.5 6.8L3.2 8.6" stroke="#a87028" stroke-width="0.5"/><circle cx="6.6" cy="7.8" r="1.7" fill="#fff" stroke="#e05020" stroke-width="1.1"/></svg>
<div class="t" style="transform:scaleX(0.8914);left:14.6px;top:318.97px;font-size:6px;line-height:7px;color:#333;font-weight:bold;font-family:'Liberation Sans',sans-serif;white-space:nowrap;">Dépense</div>
<div style="left:0px;top:331.3px;width:58px;height:1px;background:#5a5a5a"></div>
<svg style="left:1px;top:333.30px" width="10" height="10"><path d="M0.8 9.2L1.5 6.8L7.2 1.1L9 2.9L3.2 8.6Z" fill="#f2cc60" stroke="#a87028" stroke-width="0.6"/><path d="M1.5 6.8L3.2 8.6" stroke="#a87028" stroke-width="0.5"/><circle cx="6.6" cy="7.8" r="1.7" fill="#fff" stroke="#e05020" stroke-width="1.1"/></svg>
<div class="t" style="transform:scaleX(0.8914);left:14.6px;top:332.30px;font-size:6px;line-height:7px;color:#333;font-weight:bold;font-family:'Liberation Sans',sans-serif;white-space:nowrap;">Dépense</div>
<div style="left:0px;top:344.6333333333333px;width:58px;height:1px;background:#5a5a5a"></div>
<svg style="left:1px;top:346.63px" width="10" height="10"><path d="M0.8 9.2L1.5 6.8L7.2 1.1L9 2.9L3.2 8.6Z" fill="#f2cc60" stroke="#a87028" stroke-width="0.6"/><path d="M1.5 6.8L3.2 8.6" stroke="#a87028" stroke-width="0.5"/><circle cx="6.6" cy="7.8" r="1.7" fill="#fff" stroke="#e05020" stroke-width="1.1"/></svg>
<div class="t" style="transform:scaleX(0.8914);left:14.6px;top:345.63px;font-size:6px;line-height:7px;color:#333;font-weight:bold;font-family:'Liberation Sans',sans-serif;white-space:nowrap;">Dépense</div>
<div style="left:0px;top:357.9666666666667px;width:58px;height:1px;background:#5a5a5a"></div>
<svg style="left:1px;top:359.97px" width="10" height="10"><path d="M0.8 9.2L1.5 6.8L7.2 1.1L9 2.9L3.2 8.6Z" fill="#f2cc60" stroke="#a87028" stroke-width="0.6"/><path d="M1.5 6.8L3.2 8.6" stroke="#a87028" stroke-width="0.5"/><circle cx="6.6" cy="7.8" r="1.7" fill="#fff" stroke="#e05020" stroke-width="1.1"/></svg>
<div class="t" style="transform:scaleX(0.8914);left:14.6px;top:358.97px;font-size:6px;line-height:7px;color:#333;font-weight:bold;font-family:'Liberation Sans',sans-serif;white-space:nowrap;">Dépense</div>
<div style="left:0px;top:371.3px;width:58px;height:1px;background:#5a5a5a"></div>
<svg style="left:1px;top:373.30px" width="10" height="10"><path d="M0.8 9.2L1.5 6.8L7.2 1.1L9 2.9L3.2 8.6Z" fill="#f2cc60" stroke="#a87028" stroke-width="0.6"/><path d="M1.5 6.8L3.2 8.6" stroke="#a87028" stroke-width="0.5"/><circle cx="6.6" cy="7.8" r="1.7" fill="#fff" stroke="#e05020" stroke-width="1.1"/></svg>
<div class="t" style="transform:scaleX(0.8914);left:14.6px;top:372.30px;font-size:6px;line-height:7px;color:#333;font-weight:bold;font-family:'Liberation Sans',sans-serif;white-space:nowrap;">Dépense</div>
<div style="left:0px;top:384.6333333333333px;width:58px;height:1px;background:#5a5a5a"></div>
<svg style="left:1px;top:386.63px" width="10" height="10"><path d="M0.8 9.2L1.5 6.8L7.2 1.1L9 2.9L3.2 8.6Z" fill="#f2cc60" stroke="#a87028" stroke-width="0.6"/><path d="M1.5 6.8L3.2 8.6" stroke="#a87028" stroke-width="0.5"/><circle cx="6.6" cy="7.8" r="1.7" fill="#fff" stroke="#e05020" stroke-width="1.1"/></svg>
<div class="t" style="transform:scaleX(0.8914);left:14.6px;top:385.63px;font-size:6px;line-height:7px;color:#333;font-weight:bold;font-family:'Liberation Sans',sans-serif;white-space:nowrap;">Dépense</div>
<div style="left:0px;top:397.9666666666667px;width:58px;height:1px;background:#5a5a5a"></div>
<svg style="left:1px;top:399.97px" width="10" height="10"><path d="M0.8 9.2L1.5 6.8L7.2 1.1L9 2.9L3.2 8.6Z" fill="#f2cc60" stroke="#a87028" stroke-width="0.6"/><path d="M1.5 6.8L3.2 8.6" stroke="#a87028" stroke-width="0.5"/><circle cx="6.6" cy="7.8" r="1.7" fill="#fff" stroke="#e05020" stroke-width="1.1"/></svg>
<div class="t" style="transform:scaleX(0.8914);left:14.6px;top:398.97px;font-size:6px;line-height:7px;color:#333;font-weight:bold;font-family:'Liberation Sans',sans-serif;white-space:nowrap;">Dépense</div>
<div style="left:0px;top:411.3px;width:58px;height:1px;background:#5a5a5a"></div>
<svg style="left:1px;top:413.30px" width="10" height="10"><path d="M0.8 9.2L1.5 6.8L7.2 1.1L9 2.9L3.2 8.6Z" fill="#f2cc60" stroke="#a87028" stroke-width="0.6"/><path d="M1.5 6.8L3.2 8.6" stroke="#a87028" stroke-width="0.5"/><circle cx="6.6" cy="7.8" r="1.7" fill="#fff" stroke="#e05020" stroke-width="1.1"/></svg>
<div class="t" style="transform:scaleX(0.8914);left:14.6px;top:412.30px;font-size:6px;line-height:7px;color:#333;font-weight:bold;font-family:'Liberation Sans',sans-serif;white-space:nowrap;">Dépense</div>
<div style="left:0px;top:424.6333333333334px;width:58px;height:1px;background:#5a5a5a"></div>
<svg style="left:1px;top:426.63px" width="10" height="10"><path d="M0.8 9.2L1.5 6.8L7.2 1.1L9 2.9L3.2 8.6Z" fill="#f2cc60" stroke="#a87028" stroke-width="0.6"/><path d="M1.5 6.8L3.2 8.6" stroke="#a87028" stroke-width="0.5"/><circle cx="6.6" cy="7.8" r="1.7" fill="#fff" stroke="#e05020" stroke-width="1.1"/></svg>
<div class="t" style="transform:scaleX(0.8914);left:14.6px;top:425.63px;font-size:6px;line-height:7px;color:#333;font-weight:bold;font-family:'Liberation Sans',sans-serif;white-space:nowrap;">Dépense</div>
<div style="left:0px;top:437.9666666666667px;width:58px;height:1px;background:#5a5a5a"></div>
<svg style="left:1px;top:439.97px" width="10" height="10"><path d="M0.8 9.2L1.5 6.8L7.2 1.1L9 2.9L3.2 8.6Z" fill="#f2cc60" stroke="#a87028" stroke-width="0.6"/><path d="M1.5 6.8L3.2 8.6" stroke="#a87028" stroke-width="0.5"/><circle cx="6.6" cy="7.8" r="1.7" fill="#fff" stroke="#e05020" stroke-width="1.1"/></svg>
<div class="t" style="transform:scaleX(0.8914);left:14.6px;top:438.97px;font-size:6px;line-height:7px;color:#333;font-weight:bold;font-family:'Liberation Sans',sans-serif;white-space:nowrap;">Dépense</div>
<div style="left:0px;top:451.3px;width:58px;height:1px;background:#5a5a5a"></div>
<svg style="left:1.5px;top:454.30px" width="8" height="9"><rect x="0.5" y="0.5" width="7" height="8" fill="#e4e8ee" stroke="#8a94a4" stroke-width="0.7"/><rect x="1.3" y="1.3" width="5.4" height="2" fill="#7a8aa8"/></svg>
<div class="t" style="transform:scaleX(0.9209);left:14.6px;top:452.30px;font-size:6px;line-height:7px;color:#333;font-weight:bold;font-family:'Liberation Sans',sans-serif;white-space:nowrap;">S.Tot N1</div>
<div style="left:0px;top:464.6333333333334px;width:58px;height:1px;background:#5a5a5a"></div>
<svg style="left:1px;top:466.63px" width="10" height="10"><path d="M0.8 9.2L1.5 6.8L7.2 1.1L9 2.9L3.2 8.6Z" fill="#f2cc60" stroke="#a87028" stroke-width="0.6"/><path d="M1.5 6.8L3.2 8.6" stroke="#a87028" stroke-width="0.5"/><circle cx="6.6" cy="7.8" r="1.7" fill="#fff" stroke="#e05020" stroke-width="1.1"/></svg>
<div class="t" style="transform:scaleX(0.8914);left:14.6px;top:465.63px;font-size:6px;line-height:7px;color:#333;font-weight:bold;font-family:'Liberation Sans',sans-serif;white-space:nowrap;">Dépense</div>
<div style="left:0px;top:477.9666666666667px;width:58px;height:1px;background:#5a5a5a"></div>
<svg style="left:1px;top:479.97px" width="10" height="10"><path d="M0.8 9.2L1.5 6.8L7.2 1.1L9 2.9L3.2 8.6Z" fill="#f2cc60" stroke="#a87028" stroke-width="0.6"/><path d="M1.5 6.8L3.2 8.6" stroke="#a87028" stroke-width="0.5"/><circle cx="6.6" cy="7.8" r="1.7" fill="#fff" stroke="#e05020" stroke-width="1.1"/></svg>
<div class="t" style="transform:scaleX(0.8914);left:14.6px;top:478.97px;font-size:6px;line-height:7px;color:#333;font-weight:bold;font-family:'Liberation Sans',sans-serif;white-space:nowrap;">Dépense</div>
<div style="left:0px;top:491.3px;width:58px;height:1px;background:#5a5a5a"></div>
<svg style="left:1px;top:493.30px" width="10" height="10"><path d="M0.8 9.2L1.5 6.8L7.2 1.1L9 2.9L3.2 8.6Z" fill="#f2cc60" stroke="#a87028" stroke-width="0.6"/><path d="M1.5 6.8L3.2 8.6" stroke="#a87028" stroke-width="0.5"/><circle cx="6.6" cy="7.8" r="1.7" fill="#fff" stroke="#e05020" stroke-width="1.1"/></svg>
<div class="t" style="transform:scaleX(0.8914);left:14.6px;top:492.30px;font-size:6px;line-height:7px;color:#333;font-weight:bold;font-family:'Liberation Sans',sans-serif;white-space:nowrap;">Dépense</div>
<div style="left:0px;top:504.6333333333334px;width:58px;height:1px;background:#5a5a5a"></div>
<svg style="left:1px;top:506.63px" width="10" height="10"><path d="M0.8 9.2L1.5 6.8L7.2 1.1L9 2.9L3.2 8.6Z" fill="#f2cc60" stroke="#a87028" stroke-width="0.6"/><path d="M1.5 6.8L3.2 8.6" stroke="#a87028" stroke-width="0.5"/><circle cx="6.6" cy="7.8" r="1.7" fill="#fff" stroke="#e05020" stroke-width="1.1"/></svg>
<div class="t" style="transform:scaleX(0.8914);left:14.6px;top:505.63px;font-size:6px;line-height:7px;color:#333;font-weight:bold;font-family:'Liberation Sans',sans-serif;white-space:nowrap;">Dépense</div>
<div style="left:0px;top:517.9666666666667px;width:58px;height:1px;background:#5a5a5a"></div>
<svg style="left:1px;top:519.97px" width="10" height="10"><path d="M0.8 9.2L1.5 6.8L7.2 1.1L9 2.9L3.2 8.6Z" fill="#f2cc60" stroke="#a87028" stroke-width="0.6"/><path d="M1.5 6.8L3.2 8.6" stroke="#a87028" stroke-width="0.5"/><circle cx="6.6" cy="7.8" r="1.7" fill="#fff" stroke="#e05020" stroke-width="1.1"/></svg>
<div class="t" style="transform:scaleX(0.8914);left:14.6px;top:518.97px;font-size:6px;line-height:7px;color:#333;font-weight:bold;font-family:'Liberation Sans',sans-serif;white-space:nowrap;">Dépense</div>
<div style="left:0px;top:531.3px;width:58px;height:1px;background:#5a5a5a"></div>
<svg style="left:1px;top:533.30px" width="10" height="10"><path d="M0.8 9.2L1.5 6.8L7.2 1.1L9 2.9L3.2 8.6Z" fill="#f2cc60" stroke="#a87028" stroke-width="0.6"/><path d="M1.5 6.8L3.2 8.6" stroke="#a87028" stroke-width="0.5"/><circle cx="6.6" cy="7.8" r="1.7" fill="#fff" stroke="#e05020" stroke-width="1.1"/></svg>
<div class="t" style="transform:scaleX(0.8914);left:14.6px;top:532.30px;font-size:6px;line-height:7px;color:#333;font-weight:bold;font-family:'Liberation Sans',sans-serif;white-space:nowrap;">Dépense</div>
<div style="left:0px;top:544.6333333333334px;width:58px;height:1px;background:#5a5a5a"></div>
<svg style="left:1px;top:546.63px" width="10" height="10"><path d="M0.8 9.2L1.5 6.8L7.2 1.1L9 2.9L3.2 8.6Z" fill="#f2cc60" stroke="#a87028" stroke-width="0.6"/><path d="M1.5 6.8L3.2 8.6" stroke="#a87028" stroke-width="0.5"/><circle cx="6.6" cy="7.8" r="1.7" fill="#fff" stroke="#e05020" stroke-width="1.1"/></svg>
<div class="t" style="transform:scaleX(1.2840);left:13.5px;top:545.43px;font-size:6.5px;line-height:8px;color:#444;font-weight:bold;font-family:'Liberation Sans',sans-serif;white-space:nowrap;">**</div>
<div style="left:0px;top:557.9666666666667px;width:58px;height:1px;background:#5a5a5a"></div>
<svg style="left:1px;top:559.97px" width="10" height="10"><path d="M0.8 9.2L1.5 6.8L7.2 1.1L9 2.9L3.2 8.6Z" fill="#f2cc60" stroke="#a87028" stroke-width="0.6"/><path d="M1.5 6.8L3.2 8.6" stroke="#a87028" stroke-width="0.5"/><circle cx="6.6" cy="7.8" r="1.7" fill="#fff" stroke="#e05020" stroke-width="1.1"/></svg>
<div class="t" style="transform:scaleX(0.8914);left:14.6px;top:558.97px;font-size:6px;line-height:7px;color:#333;font-weight:bold;font-family:'Liberation Sans',sans-serif;white-space:nowrap;">Dépense</div>
<div class="t" style="transform:scaleX(0.7645);left:209px;top:172.50px;font-size:9px;line-height:11px;color:#111;font-weight:bold;font-family:'Liberation Sans',sans-serif;white-space:nowrap;">RECETTES:</div>
<div class="t" style="transform:scaleX(0.7839);left:148px;top:186.43px;font-size:7.5px;line-height:9px;color:#222;font-weight:normal;font-family:'Liberation Sans',sans-serif;white-space:nowrap;">LIBRE</div>
<div class="t" style="transform:scaleX(0.7695);left:209px;top:186.13px;font-size:7px;line-height:8px;color:#222;font-weight:normal;font-family:'Liberation Sans',sans-serif;white-space:nowrap;">01</div>
<div class="t" style="transform:scaleX(0.7839);left:148px;top:199.77px;font-size:7.5px;line-height:9px;color:#222;font-weight:normal;font-family:'Liberation Sans',sans-serif;white-space:nowrap;">LIBRE</div>
<div class="t" style="transform:scaleX(0.7695);left:209px;top:199.47px;font-size:7px;line-height:8px;color:#222;font-weight:normal;font-family:'Liberation Sans',sans-serif;white-space:nowrap;">02</div>
<div class="t" style="transform:scaleX(0.7994);left:148px;top:213.10px;font-size:7.5px;line-height:9px;color:#222;font-weight:normal;font-family:'Liberation Sans',sans-serif;white-space:nowrap;">ACTE</div>
<div class="t" style="transform:scaleX(0.7695);left:209px;top:212.80px;font-size:7px;line-height:8px;color:#222;font-weight:normal;font-family:'Liberation Sans',sans-serif;white-space:nowrap;">03</div>
<div class="t" style="transform:scaleX(0.7839);left:148px;top:226.43px;font-size:7.5px;line-height:9px;color:#222;font-weight:normal;font-family:'Liberation Sans',sans-serif;white-space:nowrap;">LIBRE</div>
<div class="t" style="transform:scaleX(0.7695);left:209px;top:226.13px;font-size:7px;line-height:8px;color:#222;font-weight:normal;font-family:'Liberation Sans',sans-serif;white-space:nowrap;">04</div>
<div class="t" style="transform:scaleX(0.7839);left:148px;top:239.77px;font-size:7.5px;line-height:9px;color:#222;font-weight:normal;font-family:'Liberation Sans',sans-serif;white-space:nowrap;">LIBRE</div>
<div class="t" style="transform:scaleX(0.7695);left:209px;top:239.47px;font-size:7px;line-height:8px;color:#222;font-weight:normal;font-family:'Liberation Sans',sans-serif;white-space:nowrap;">05</div>
<div class="t" style="transform:scaleX(0.7839);left:148px;top:253.10px;font-size:7.5px;line-height:9px;color:#222;font-weight:normal;font-family:'Liberation Sans',sans-serif;white-space:nowrap;">LIBRE</div>
<div class="t" style="transform:scaleX(0.7695);left:209px;top:252.80px;font-size:7px;line-height:8px;color:#222;font-weight:normal;font-family:'Liberation Sans',sans-serif;white-space:nowrap;">06</div>
<div class="t" style="transform:scaleX(0.7839);left:148px;top:266.43px;font-size:7.5px;line-height:9px;color:#222;font-weight:normal;font-family:'Liberation Sans',sans-serif;white-space:nowrap;">LIBRE</div>
<div class="t" style="transform:scaleX(0.7695);left:209px;top:266.13px;font-size:7px;line-height:8px;color:#222;font-weight:normal;font-family:'Liberation Sans',sans-serif;white-space:nowrap;">07</div>
<div class="t" style="transform:scaleX(0.7839);left:148px;top:279.77px;font-size:7.5px;line-height:9px;color:#222;font-weight:normal;font-family:'Liberation Sans',sans-serif;white-space:nowrap;">LIBRE</div>
<div class="t" style="transform:scaleX(0.7695);left:209px;top:279.47px;font-size:7px;line-height:8px;color:#222;font-weight:normal;font-family:'Liberation Sans',sans-serif;white-space:nowrap;">08</div>
<div class="t" style="transform:scaleX(0.7107);left:78.7px;top:213.10px;font-size:7.8px;line-height:9px;color:#223;font-weight:normal;font-family:'Liberation Sans',sans-serif;white-space:nowrap;">sengelin marc</div>
<div class="t" style="transform:scaleX(0.6973);left:220.8px;top:319.17px;font-size:8.5px;line-height:10px;color:#222;font-weight:normal;font-family:'Liberation Sans',sans-serif;white-space:nowrap;">Terrain</div>
<div class="t" style="transform:scaleX(0.6969);left:220.8px;top:332.50px;font-size:8.5px;line-height:10px;color:#222;font-weight:normal;font-family:'Liberation Sans',sans-serif;white-space:nowrap;">Frais nota</div>
<div class="t" style="transform:scaleX(0.6967);left:220.8px;top:345.83px;font-size:8.5px;line-height:10px;color:#222;font-weight:normal;font-family:'Liberation Sans',sans-serif;white-space:nowrap;">Taxe TLE</div>
<div class="t" style="transform:scaleX(0.6968);left:220.8px;top:359.17px;font-size:8.5px;line-height:10px;color:#222;font-weight:normal;font-family:'Liberation Sans',sans-serif;white-space:nowrap;">Taxe CA</div>
<div class="t" style="transform:scaleX(0.6967);left:220.8px;top:372.50px;font-size:8.5px;line-height:10px;color:#222;font-weight:normal;font-family:'Liberation Sans',sans-serif;white-space:nowrap;">Taxe PLD</div>
<div class="t" style="transform:scaleX(0.8747);left:209px;top:386.63px;font-size:8px;line-height:10px;color:#111;font-weight:bold;font-family:'Liberation Sans',sans-serif;white-space:nowrap;font-style:italic;">Frais d'hui</div>
<div class="t" style="transform:scaleX(0.6966);left:220.8px;top:399.17px;font-size:8.5px;line-height:10px;color:#222;font-weight:normal;font-family:'Liberation Sans',sans-serif;white-space:nowrap;">Constat P</div>
<div class="t" style="transform:scaleX(0.8741);left:209px;top:413.30px;font-size:8px;line-height:10px;color:#111;font-weight:bold;font-family:'Liberation Sans',sans-serif;white-space:nowrap;font-style:italic;">Géomètre</div>
<div class="t" style="transform:scaleX(0.6969);left:220.8px;top:425.83px;font-size:8.5px;line-height:10px;color:#222;font-weight:normal;font-family:'Liberation Sans',sans-serif;white-space:nowrap;">Plan topo</div>
<div class="t" style="transform:scaleX(0.6972);left:220.8px;top:439.17px;font-size:8.5px;line-height:10px;color:#222;font-weight:normal;font-family:'Liberation Sans',sans-serif;white-space:nowrap;">Bornage</div>
<div class="t" style="transform:scaleX(0.8289);left:209px;top:479.97px;font-size:8px;line-height:10px;color:#111;font-weight:bold;font-family:'Liberation Sans',sans-serif;white-space:nowrap;">VRD</div>
<div class="t" style="transform:scaleX(0.8751);left:209px;top:493.30px;font-size:8px;line-height:10px;color:#111;font-weight:bold;font-family:'Liberation Sans',sans-serif;white-space:nowrap;font-style:italic;">Adaptation</div>
<div class="t" style="transform:scaleX(0.6968);left:220.8px;top:505.83px;font-size:8.5px;line-height:10px;color:#222;font-weight:normal;font-family:'Liberation Sans',sans-serif;white-space:nowrap;">Divers</div>
<div class="t" style="transform:scaleX(0.8738);left:209px;top:519.97px;font-size:8px;line-height:10px;color:#111;font-weight:bold;font-family:'Liberation Sans',sans-serif;white-space:nowrap;font-style:italic;">Voirie rése</div>
<div class="t" style="transform:scaleX(0.6967);left:220.8px;top:532.50px;font-size:8.5px;line-height:10px;color:#222;font-weight:normal;font-family:'Liberation Sans',sans-serif;white-space:nowrap;">Gros oeu</div>
<div class="t" style="transform:scaleX(0.8750);left:209px;top:558.27px;font-size:8px;line-height:10px;color:#111;font-weight:bold;font-family:'Liberation Sans',sans-serif;white-space:nowrap;font-style:italic;">Branchem</div>
<div class="t" style="left:147.5px;top:453.80px;font-size:7px;line-height:8px;color:#111;font-weight:bold;font-family:'Liberation Sans',sans-serif;white-space:nowrap;text-decoration:underline;">0</div>
<div class="t" style="transform:scaleX(0.7499);left:209px;top:452.80px;font-size:7px;line-height:8px;color:#111;font-weight:bold;font-family:'Liberation Sans',sans-serif;white-space:nowrap;text-decoration:underline;">Sous total fon</div>
<div style="left:0px;top:562.3px;width:1024px;height:14px;background:#b9d3f2"></div>
<div style="left:4.5px;top:564.5px;width:41.5px;height:11.5px;background:#a9c5e8;border-top:1px solid #9ab4d8;border-left:1px solid #9ab4d8"></div>
<div class="t" style="transform:scaleX(0.8745);left:8.5px;top:565.50px;font-size:7.5px;line-height:9px;color:#222;font-weight:normal;font-family:'Liberation Sans',sans-serif;white-space:nowrap;">Ligne: 20</div>
<div style="left:60px;top:563px;width:75.5px;height:12px;background:#fff;border:1px solid #555;border-right-color:#eee;border-bottom-color:#eee"></div>
<div style="left:126px;top:564.5px;width:8.5px;height:9px;background:#d4d0c8;border-right:1px solid #444;border-bottom:1px solid #444"></div>
<svg style="left:128px;top:568px" width="5" height="3"><path d="M0 0H5L2.5 3Z" fill="#000"/></svg>
<div style="left:158.5px;top:564.5px;width:46.5px;height:11.5px;background:#a9c5e8;border-top:1px solid #9ab4d8;border-left:1px solid #9ab4d8"></div>
<div class="t" style="transform:scaleX(0.8331);left:192.5px;top:565.50px;font-size:7.5px;line-height:9px;color:#222;font-weight:normal;font-family:'Liberation Sans',sans-serif;white-space:nowrap;">ALT</div>
<div style="left:205.5px;top:564.5px;width:40px;height:11.5px;background:#a9c5e8;border-top:1px solid #9ab4d8;border-left:1px solid #9ab4d8"></div>
<div class="t" style="transform:scaleX(0.7605);left:218px;top:565.50px;font-size:7.5px;line-height:9px;color:#111;font-weight:normal;font-family:'Liberation Sans',sans-serif;white-space:nowrap;">Document</div>
<svg style="left:207px;top:565px" width="10" height="10"><path d="M1 1H6L8.5 3.5V9H1Z" fill="#f4f4f8" stroke="#6a7a94" stroke-width="0.7"/><path d="M3 8L8 3" stroke="#4a70b8" stroke-width="1.2"/></svg>
<svg style="left:1003px;top:161px" width="15" height="16"><rect x="1.5" y="0.5" width="12" height="15" fill="#f8f8f8" stroke="#b8b8c0" stroke-width="0.8"/><path d="M3.5 3.5H11.5M3.5 6H11.5M3.5 8.5H11.5M3.5 11H9" stroke="#909aa8" stroke-width="0.8"/><path d="M7 13L12 5" stroke="#e8b840" stroke-width="1.6"/></svg>
<svg style="left:1002px;top:180px" width="17" height="16"><path d="M0.5 2.5H6L7.5 4H15.5V14.5H0.5Z" fill="#f0d070" stroke="#c8a040" stroke-width="0.7"/><circle cx="8" cy="8" r="4" fill="#a8c8f0" stroke="#5878a8" stroke-width="1.2"/><path d="M11 11L15 15" stroke="#886040" stroke-width="2.2"/></svg>
<svg style="left:1002px;top:201px" width="17" height="15"><circle cx="5" cy="4.5" r="3" fill="#e8b890"/><path d="M1.8 3.5Q5 -0.5 8.2 3.5" fill="#6a4020"/><circle cx="12" cy="4.5" r="3" fill="#e8b890"/><path d="M8.8 3.5Q12 -0.5 15.2 3.5" fill="#6a4020"/><path d="M0 14.5Q0 8.5 5 8.5Q10 8.5 10 14.5Z" fill="#5a9ad8"/><path d="M7 14.5Q7 8.5 12 8.5Q17 8.5 17 14.5Z" fill="#f0c890"/></svg>
<svg style="left:1003px;top:221px" width="15" height="15"><path d="M2 2L13 13" stroke="#c0c4c8" stroke-width="2"/><path d="M13 2L6 9" stroke="#a8acb0" stroke-width="2"/><path d="M6.5 8.5L1.5 13.5" stroke="#222" stroke-width="3"/></svg>
<svg style="left:1002px;top:240px" width="17" height="17"><path d="M1 8L8.5 1L16 8V15H1Z" fill="#fff" stroke="#5858b0" stroke-width="0.8"/><path d="M0 8.5L8.5 0.5L16.5 8.5L12 10L4 10Z" fill="#40c040" stroke="#208020" stroke-width="0.6"/><rect x="9.5" y="10" width="4" height="5" fill="#e8a070"/></svg>
<svg style="left:1003px;top:260px" width="16" height="16"><path d="M1 11Q1 1.5 8 1.5Q15 1.5 15 11Z" fill="#f0b020"/><path d="M0 11.5H16V14Q8 15.5 0 14Z" fill="#e09818"/><path d="M8 1.5V11" stroke="#ffd040" stroke-width="1.5"/></svg>
<div style="left:244px;top:189.2px;width:462px;height:390px;background:#d4d0c8;border-left:1px solid #e8e6e0;border-top:1px solid #e8e6e0;border-right:1px solid #606060"></div>
<div style="left:245.2px;top:190.5px;width:459.5px;height:9.2px;background:#808080"></div>
<div class="t" style="transform:scaleX(0.7769);left:246px;top:190.30px;font-size:8px;line-height:10px;color:#d8d6d0;font-weight:bold;font-family:'Liberation Sans',sans-serif;white-space:nowrap;">Variables</div>
<div style="left:695px;top:191px;width:8.5px;height:8px;background:#d4d0c8;border-left:1px solid #fff;border-top:1px solid #fff;border-right:1px solid #404040;border-bottom:1px solid #404040"></div>
<svg style="left:697px;top:192.8px" width="4.5" height="4.4"><path d="M0.6 0.6L3.9000000000000004 3.8M3.9000000000000004 0.6L0.6 3.8" stroke="#000" stroke-width="1.1"/></svg>
<div style="left:253.9px;top:206.5px;width:337.5px;height:335px;background:#fff;border-left:1px solid #808080;border-top:1px solid #808080;border-right:1px solid #fff;border-bottom:1px solid #f4f2ee"></div>
<div style="left:254.9px;top:207.3px;width:1px;height:333px;background:#5a5a5a"></div>
<div style="left:254.9px;top:207.3px;width:335.5px;height:0.8px;background:#8a8a8a"></div>
<div style="left:255.9px;top:208px;width:105.1px;height:8px;background:#d4d0c8;border-left:1px solid #f4f2ee;border-top:1px solid #f4f2ee;border-right:1px solid #808080;border-bottom:1px solid #606060"></div>
<div style="left:361px;top:208px;width:106.39999999999998px;height:8px;background:#d4d0c8;border-left:1px solid #f4f2ee;border-top:1px solid #f4f2ee;border-right:1px solid #808080;border-bottom:1px solid #606060"></div>
<div style="left:467.4px;top:208px;width:80.20000000000005px;height:8px;background:#d4d0c8;border-left:1px solid #f4f2ee;border-top:1px solid #f4f2ee;border-right:1px solid #808080;border-bottom:1px solid #606060"></div>
<div style="left:547.6px;top:208px;width:42.799999999999955px;height:8px;background:#d4d0c8;border-left:1px solid #f4f2ee;border-top:1px solid #f4f2ee;border-right:1px solid #808080;border-bottom:1px solid #606060"></div>
<div class="t" style="transform:scaleX(0.7945);left:257.7px;top:207.80px;font-size:7px;line-height:8px;color:#222;font-weight:normal;font-family:'Liberation Sans',sans-serif;white-space:nowrap;">Variable</div>
<div class="t" style="transform:scaleX(0.6584);left:410px;top:207.80px;font-size:7px;line-height:8px;color:#222;font-weight:normal;font-family:'Liberation Sans',sans-serif;white-space:nowrap;">Type</div>
<div class="t" style="transform:scaleX(0.7353);left:501.5px;top:207.80px;font-size:7px;line-height:8px;color:#222;font-weight:normal;font-family:'Liberation Sans',sans-serif;white-space:nowrap;">Valeur</div>
<div class="t" style="transform:scaleX(0.6194);left:257px;top:216.00px;font-size:8px;line-height:10px;color:#111;font-weight:normal;font-family:'Liberation Sans',sans-serif;white-space:nowrap;">SHAB</div>
<div class="t" style="transform:scaleX(0.7632);left:401.0px;top:216.50px;font-size:7.5px;line-height:9px;color:#111;font-weight:normal;font-family:'Liberation Sans',sans-serif;white-space:nowrap;">Surface M²</div>
<div class="t" style="transform:scaleX(0.7238);left:257px;top:223.65px;font-size:8px;line-height:10px;color:#111;font-weight:normal;font-family:'Liberation Sans',sans-serif;white-space:nowrap;">PRIX DE VENTE TTC M2</div>
<div class="t" style="transform:scaleX(0.7794);left:402.0px;top:224.15px;font-size:7.5px;line-height:9px;color:#111;font-weight:normal;font-family:'Liberation Sans',sans-serif;white-space:nowrap;">Montant €</div>
<div class="t" style="transform:scaleX(0.7119);left:257px;top:231.30px;font-size:8px;line-height:10px;color:#111;font-weight:normal;font-family:'Liberation Sans',sans-serif;white-space:nowrap;">ACQUISITION TERRAIN</div>
<div class="t" style="transform:scaleX(0.7890);left:408.75px;top:231.80px;font-size:7.5px;line-height:9px;color:#111;font-weight:normal;font-family:'Liberation Sans',sans-serif;white-space:nowrap;">Date</div>
<div class="t" style="transform:scaleX(0.7012);left:257px;top:238.95px;font-size:8px;line-height:10px;color:#111;font-weight:normal;font-family:'Liberation Sans',sans-serif;white-space:nowrap;">FRAISFINANCIERS</div>
<div class="t" style="transform:scaleX(0.7008);left:257px;top:246.60px;font-size:8px;line-height:10px;color:#111;font-weight:normal;font-family:'Liberation Sans',sans-serif;white-space:nowrap;">TAUXFRAISFINANCIERS</div>
<div class="t" style="transform:scaleX(0.7313);left:257px;top:254.25px;font-size:8px;line-height:10px;color:#111;font-weight:normal;font-family:'Liberation Sans',sans-serif;white-space:nowrap;">DEMARRAGE TRAVAUX</div>
<div class="t" style="transform:scaleX(0.7890);left:408.75px;top:254.75px;font-size:7.5px;line-height:9px;color:#111;font-weight:normal;font-family:'Liberation Sans',sans-serif;white-space:nowrap;">Date</div>
<div style="left:610px;top:206px;width:75.5px;height:14px;background:#d4d0c8;border-left:1px solid #fff;border-top:1px solid #fff;border-right:1px solid #404040;border-bottom:1px solid #404040"></div>
<div style="left:611px;top:218px;width:73.5px;height:1px;background:#808080"></div>
<div style="left:683.5px;top:207px;width:1px;height:12px;background:#808080"></div>
<div style="left:610px;top:223.2px;width:75.5px;height:13.8px;background:#d4d0c8;border:1px solid #222"></div>
<div style="left:611px;top:224.2px;width:73.5px;height:11.8px;border-left:1px solid #fff;border-top:1px solid #fff;border-right:1px solid #606060;border-bottom:1px solid #606060"></div>
<div style="left:610px;top:240.2px;width:75.5px;height:13.8px;background:#d4d0c8;border-left:1px solid #fff;border-top:1px solid #fff;border-right:1px solid #404040;border-bottom:1px solid #404040"></div>
<div style="left:611px;top:252.0px;width:73.5px;height:1px;background:#808080"></div>
<div style="left:683.5px;top:241.2px;width:1px;height:11.8px;background:#808080"></div>
<svg style="left:630px;top:207px" width="11" height="11"><rect x="0.5" y="0.5" width="6" height="8" fill="#f0d040" stroke="#b09020" stroke-width="0.6"/><circle cx="7.5" cy="7.5" r="3" fill="#30a030"/><path d="M5.8 7.5H9.2M7.5 5.8V9.2" stroke="#fff" stroke-width="1"/></svg>
<div class="t" style="transform:scaleX(0.7649);left:641.5px;top:208.00px;font-size:8px;line-height:10px;color:#111;font-weight:normal;font-family:'Liberation Sans',sans-serif;white-space:nowrap;">Nouveau</div>
<svg style="left:633px;top:223.5px" width="11" height="12"><path d="M0.5 5H4L5 4H10V11H0.5Z" fill="#f0d040" stroke="#b09020" stroke-width="0.6"/><path d="M3 4Q6 0 9 3" stroke="#30a030" stroke-width="1.6" fill="none"/></svg>
<div class="t" style="transform:scaleX(0.7381);left:644px;top:225.00px;font-size:8px;line-height:10px;color:#111;font-weight:normal;font-family:'Liberation Sans',sans-serif;white-space:nowrap;">Modifier</div>
<svg style="left:631px;top:242px" width="9" height="9"><path d="M0.5 0.5L8.5 8.5M8.5 0.5L0.5 8.5" stroke="#e04020" stroke-width="1.3"/></svg>
<div class="t" style="transform:scaleX(0.6774);left:641px;top:242.20px;font-size:8px;line-height:10px;color:#111;font-weight:normal;font-family:'Liberation Sans',sans-serif;white-space:nowrap;">Supprimer</div>
<svg style="left:615.5px;top:259px" width="4" height="9"><path d="M2 0L4 3H2.8V9H1.2V3H0Z" fill="#3aa050"/></svg>
<div class="t" style="transform:scaleX(0.7099);left:622.8px;top:258.70px;font-size:8px;line-height:10px;color:#111;font-weight:normal;font-family:'Liberation Sans',sans-serif;white-space:nowrap;">Monter une variable</div>
<svg style="left:615.5px;top:272px" width="4" height="9"><path d="M2 9L4 6H2.8V0H1.2V6H0Z" fill="#3aa050"/></svg>
<div class="t" style="transform:scaleX(0.7124);left:622.8px;top:271.70px;font-size:8px;line-height:10px;color:#111;font-weight:normal;font-family:'Liberation Sans',sans-serif;white-space:nowrap;">Descendre une variable</div>
<svg style="left:630px;top:287.5px" width="6" height="9"><rect x="0" y="0" width="1" height="9" fill="#7080a0"/><path d="M2 1H6M2 3H5M2 5H6M2 7H5" stroke="#a0b0c8" stroke-width="0.9"/></svg>
<div class="t" style="transform:scaleX(0.6980);left:638px;top:287.00px;font-size:8px;line-height:10px;color:#111;font-weight:normal;font-family:'Liberation Sans',sans-serif;white-space:nowrap;">Trier par type</div>
<div style="left:591.4px;top:557.3px;width:50.2px;height:14.4px;background:#d4d0c8;border-left:1px solid #fff;border-top:1px solid #fff;border-right:1px solid #404040;border-bottom:1px solid #404040"></div>
<div style="left:592.4px;top:569.6999999999999px;width:48.2px;height:1px;background:#808080"></div>
<div style="left:639.6px;top:558.3px;width:1px;height:12.4px;background:#808080"></div>
<div style="left:644px;top:557.3px;width:53px;height:14.4px;background:#d4d0c8;border-left:1px solid #fff;border-top:1px solid #fff;border-right:1px solid #404040;border-bottom:1px solid #404040"></div>
<div style="left:645px;top:569.6999999999999px;width:51px;height:1px;background:#808080"></div>
<div style="left:695px;top:558.3px;width:1px;height:12.4px;background:#808080"></div>
<svg style="left:606px;top:559.5px" width="9" height="9"><circle cx="4.5" cy="4.5" r="4.3" fill="#28a028"/><path d="M2 4.5H6.5M4.8 2.5L6.8 4.5L4.8 6.5" stroke="#fff" stroke-width="1.1" fill="none"/></svg>
<div class="t" style="transform:scaleX(0.9069);left:616.5px;top:559.50px;font-size:8px;line-height:10px;color:#111;font-weight:normal;font-family:'Liberation Sans',sans-serif;white-space:nowrap;"><span style="text-decoration:underline;text-decoration-thickness:1px;text-underline-offset:1px">O</span>K</div>
<svg style="left:656px;top:559px" width="8" height="10"><path d="M0.5 1H4.5V9H0.5Z" fill="#a88a50"/><path d="M2 0.5L6 2V9.5L2 8Z" fill="#604820"/><path d="M6 4L8 5.5L6 7Z" fill="#222"/></svg>
<div class="t" style="transform:scaleX(0.7071);left:667px;top:560.00px;font-size:8px;line-height:10px;color:#111;font-weight:normal;font-family:'Liberation Sans',sans-serif;white-space:nowrap;">Annuler</div>
<div style="left:335.7px;top:288.3px;width:195px;height:92px;background:#d4d0c8;border-left:1px solid #e8e6e0;border-top:1px solid #e8e6e0;border-right:1px solid #404040;border-bottom:1px solid #404040"></div>
<div style="left:336.7px;top:289.3px;width:193px;height:90px;border-left:1px solid #fff;border-top:1px solid #fff;border-right:1px solid #808080;border-bottom:1px solid #808080"></div>
<div style="left:337.3px;top:290px;width:191.7px;height:9.7px;background:#0a246a"></div>
<div class="t" style="transform:scaleX(0.8225);left:338.5px;top:290.00px;font-size:8px;line-height:10px;color:#fff;font-weight:bold;font-family:'Liberation Sans',sans-serif;white-space:nowrap;">Insertion de variable</div>
<div style="left:519.4px;top:291px;width:8.5px;height:7.5px;background:#d4d0c8;border-left:1px solid #fff;border-top:1px solid #fff;border-right:1px solid #404040;border-bottom:1px solid #404040"></div>
<svg style="left:521.4px;top:292.8px" width="4.5" height="3.9"><path d="M0.6 0.6L3.9000000000000004 3.3M3.9000000000000004 0.6L0.6 3.3" stroke="#000" stroke-width="1.1"/></svg>
<div class="t" style="transform:scaleX(0.6953);left:345.6px;top:307.50px;font-size:8px;line-height:10px;color:#111;font-weight:normal;font-family:'Liberation Sans',sans-serif;white-space:nowrap;">Variable</div>
<div class="t" style="transform:scaleX(0.6919);left:346px;top:324.50px;font-size:8px;line-height:10px;color:#111;font-weight:normal;font-family:'Liberation Sans',sans-serif;white-space:nowrap;">Type</div>
<div class="t" style="transform:scaleX(0.6879);left:346px;top:339.80px;font-size:8px;line-height:10px;color:#111;font-weight:normal;font-family:'Liberation Sans',sans-serif;white-space:nowrap;">Valeur</div>
<div style="left:380px;top:305px;width:140px;height:10px;background:#fff;border-left:1px solid #808080;border-top:1px solid #808080;border-right:1px solid #fff;border-bottom:1px solid #fff"></div>
<div style="left:381px;top:306px;width:139px;height:1px;background:#404040"></div>
<div style="left:381px;top:306px;width:1px;height:8px;background:#404040"></div>
<div class="t" style="transform:scaleX(0.6652);left:382.5px;top:305.00px;font-size:8px;line-height:10px;color:#111;font-weight:normal;font-family:'Liberation Sans',sans-serif;white-space:nowrap;">SHAB</div>
<div style="left:380px;top:320px;width:140px;height:12px;background:#fff;border-left:1px solid #808080;border-top:1px solid #808080;border-right:1px solid #fff;border-bottom:1px solid #fff"></div>
<div style="left:381px;top:321px;width:139px;height:1px;background:#404040"></div>
<div style="left:381px;top:321px;width:1px;height:10px;background:#404040"></div>
<div style="left:512px;top:321.5px;width:7.8px;height:9px;background:#d4d0c8;border-left:1px solid #fff;border-top:1px solid #fff;border-right:1px solid #404040;border-bottom:1px solid #404040"></div>
<svg style="left:514px;top:325px" width="4.5" height="3"><path d="M0 0H4.5L2.25 2.5Z" fill="#000"/></svg>
<div style="left:341px;top:365.4px;width:6.5px;height:6.5px;background:#fff;border-left:1px solid #808080;border-top:1px solid #808080;border-right:1px solid #fff;border-bottom:1px solid #fff"></div>
<div class="t" style="transform:scaleX(0.6838);left:350.8px;top:363.20px;font-size:8px;line-height:10px;color:#111;font-weight:normal;font-family:'Liberation Sans',sans-serif;white-space:nowrap;">Chiffres clés</div>
<div style="left:379.7px;top:331.5px;width:141.3px;height:73.8px;background:#fff;border:1px solid #6a6a6a;border-right-color:#303030;border-bottom-color:#303030"></div>
<div style="left:512px;top:332.5px;width:8px;height:71.5px;background:#eeede8"></div>
<div style="left:512px;top:332.5px;width:8px;height:8px;background:#d4d0c8;border-left:1px solid #fff;border-top:1px solid #fff;border-right:1px solid #404040;border-bottom:1px solid #404040"></div>
<svg style="left:514px;top:335px" width="4.5" height="3"><path d="M0 2.5H4.5L2.25 0Z" fill="#000"/></svg>
<div style="left:512px;top:340.5px;width:8px;height:23.5px;background:#d4d0c8;border-left:1px solid #fff;border-top:1px solid #fff;border-right:1px solid #404040;border-bottom:1px solid #404040"></div>
<div style="left:512px;top:396px;width:8px;height:8px;background:#d4d0c8;border-left:1px solid #fff;border-top:1px solid #fff;border-right:1px solid #404040;border-bottom:1px solid #404040"></div>
<svg style="left:514px;top:398.5px" width="4.5" height="3"><path d="M0 0H4.5L2.25 2.5Z" fill="#000"/></svg>
<div class="t" style="transform:scaleX(0.6506);left:390px;top:330.80px;font-size:8px;line-height:10px;color:#111;font-weight:normal;font-family:'Liberation Sans',sans-serif;white-space:nowrap;">Date</div>
<div class="t" style="transform:scaleX(0.7167);left:390px;top:339.83px;font-size:8px;line-height:10px;color:#111;font-weight:normal;font-family:'Liberation Sans',sans-serif;white-space:nowrap;">Montant €</div>
<div class="t" style="transform:scaleX(0.7261);left:390px;top:348.86px;font-size:8px;line-height:10px;color:#111;font-weight:normal;font-family:'Liberation Sans',sans-serif;white-space:nowrap;">Surface Activité en M²</div>
<div class="t" style="transform:scaleX(0.6919);left:390px;top:357.89px;font-size:8px;line-height:10px;color:#111;font-weight:normal;font-family:'Liberation Sans',sans-serif;white-space:nowrap;">Surface Autres en M²</div>
<div class="t" style="transform:scaleX(0.6851);left:390px;top:366.92px;font-size:8px;line-height:10px;color:#111;font-weight:normal;font-family:'Liberation Sans',sans-serif;white-space:nowrap;">Surface Bureau M²</div>
<div class="t" style="transform:scaleX(0.6866);left:390px;top:375.95px;font-size:8px;line-height:10px;color:#111;font-weight:normal;font-family:'Liberation Sans',sans-serif;white-space:nowrap;">Surface Commerces M²</div>
<div class="t" style="transform:scaleX(0.6965);left:390px;top:384.98px;font-size:8px;line-height:10px;color:#111;font-weight:normal;font-family:'Liberation Sans',sans-serif;white-space:nowrap;">Surface Entrepôts - Logistique M²</div>
<div class="t" style="transform:scaleX(0.6915);left:390px;top:394.01px;font-size:8px;line-height:10px;color:#111;font-weight:normal;font-family:'Liberation Sans',sans-serif;white-space:nowrap;">Surface Industrie en M²</div>
<svg style="left:380.5px;top:332.5px" width="8" height="9"><rect x="0.3" y="0.3" width="7.4" height="8.4" fill="#fff" stroke="#c8c8c8" stroke-width="0.5"/><rect x="0" y="0" width="8" height="2.8" fill="#e02828"/><path d="M1.5 5H6.5M1.5 7H6.5" stroke="#b0b0b0" stroke-width="0.6"/></svg>
<svg style="left:380px;top:341px" width="9" height="8"><path d="M0.5 5.5L5.5 0.5L8.5 2.5L3.5 7.5Z" fill="#78c878" stroke="#3a9a3a" stroke-width="0.6"/><circle cx="4.5" cy="4" r="1.1" fill="#3a9a3a"/></svg>
<svg style="left:380.5px;top:350.5px" width="8" height="8"><rect x="0.5" y="0.5" width="7" height="7" fill="#7aa4e8" stroke="#5a7ab8" stroke-width="0.6"/><rect x="0" y="0" width="1.6" height="1.6" fill="#111"/><rect x="6.4" y="0" width="1.6" height="1.6" fill="#111"/><rect x="0" y="6.4" width="1.6" height="1.6" fill="#111"/><rect x="6.4" y="6.4" width="1.6" height="1.6" fill="#111"/></svg>
<svg style="left:380.5px;top:359px" width="9" height="9"><path d="M0.8 3.5L5 8.5M5 3.5L0.8 8.5" stroke="#111" stroke-width="1.2"/><path d="M5.8 1.2Q7.6 0 8.2 1.3Q8.2 2.2 5.9 4H8.5" stroke="#5a7ab8" stroke-width="0.7" fill="none"/></svg>
<svg style="left:381px;top:368.5px" width="8" height="8"><path d="M0.5 7.5V4L4 1L7.5 4V7.5Z" fill="#c8d4e0" stroke="#8898b0" stroke-width="0.6"/></svg>
<div style="left:706px;top:189.5px;width:1px;height:373px;background:#a0a0a0"></div>
<div style="left:709px;top:118.5px;width:1px;height:444px;background:#d8d8d8"></div>
<div style="left:706.2px;top:189.43333333333337px;width:2px;height:3.4px;background:#505050;border-radius:0 1.5px 1.5px 0"></div>
<div style="left:706.2px;top:202.7666666666667px;width:2px;height:3.4px;background:#505050;border-radius:0 1.5px 1.5px 0"></div>
<div style="left:706.2px;top:216.10000000000002px;width:2px;height:3.4px;background:#505050;border-radius:0 1.5px 1.5px 0"></div>
<div style="left:706.2px;top:229.43333333333337px;width:2px;height:3.4px;background:#505050;border-radius:0 1.5px 1.5px 0"></div>
<div style="left:706.2px;top:242.7666666666667px;width:2px;height:3.4px;background:#505050;border-radius:0 1.5px 1.5px 0"></div>
<div style="left:706.2px;top:256.1px;width:2px;height:3.4px;background:#505050;border-radius:0 1.5px 1.5px 0"></div>
<div style="left:706.2px;top:269.43333333333334px;width:2px;height:3.4px;background:#505050;border-radius:0 1.5px 1.5px 0"></div>
<div style="left:706.2px;top:282.7666666666667px;width:2px;height:3.4px;background:#505050;border-radius:0 1.5px 1.5px 0"></div>
<div style="left:706.2px;top:322.7666666666667px;width:2px;height:3.4px;background:#505050;border-radius:0 1.5px 1.5px 0"></div>
<div style="left:706.2px;top:336.1px;width:2px;height:3.4px;background:#505050;border-radius:0 1.5px 1.5px 0"></div>
<div style="left:706.2px;top:349.43333333333334px;width:2px;height:3.4px;background:#505050;border-radius:0 1.5px 1.5px 0"></div>
<div style="left:706.2px;top:362.7666666666667px;width:2px;height:3.4px;background:#505050;border-radius:0 1.5px 1.5px 0"></div>
<div style="left:706.2px;top:376.1px;width:2px;height:3.4px;background:#505050;border-radius:0 1.5px 1.5px 0"></div>
<div style="left:706.2px;top:402.7666666666667px;width:2px;height:3.4px;background:#505050;border-radius:0 1.5px 1.5px 0"></div>
<div style="left:706.2px;top:429.4333333333334px;width:2px;height:3.4px;background:#505050;border-radius:0 1.5px 1.5px 0"></div>
<div style="left:706.2px;top:442.7666666666667px;width:2px;height:3.4px;background:#505050;border-radius:0 1.5px 1.5px 0"></div>
<div style="left:706.2px;top:456.1px;width:2px;height:3.4px;background:#505050;border-radius:0 1.5px 1.5px 0"></div>
<div style="left:706.2px;top:509.4333333333334px;width:2px;height:3.4px;background:#505050;border-radius:0 1.5px 1.5px 0"></div>
<div style="left:706.2px;top:536.0999999999999px;width:2px;height:3.4px;background:#505050;border-radius:0 1.5px 1.5px 0"></div>
</body></html>
